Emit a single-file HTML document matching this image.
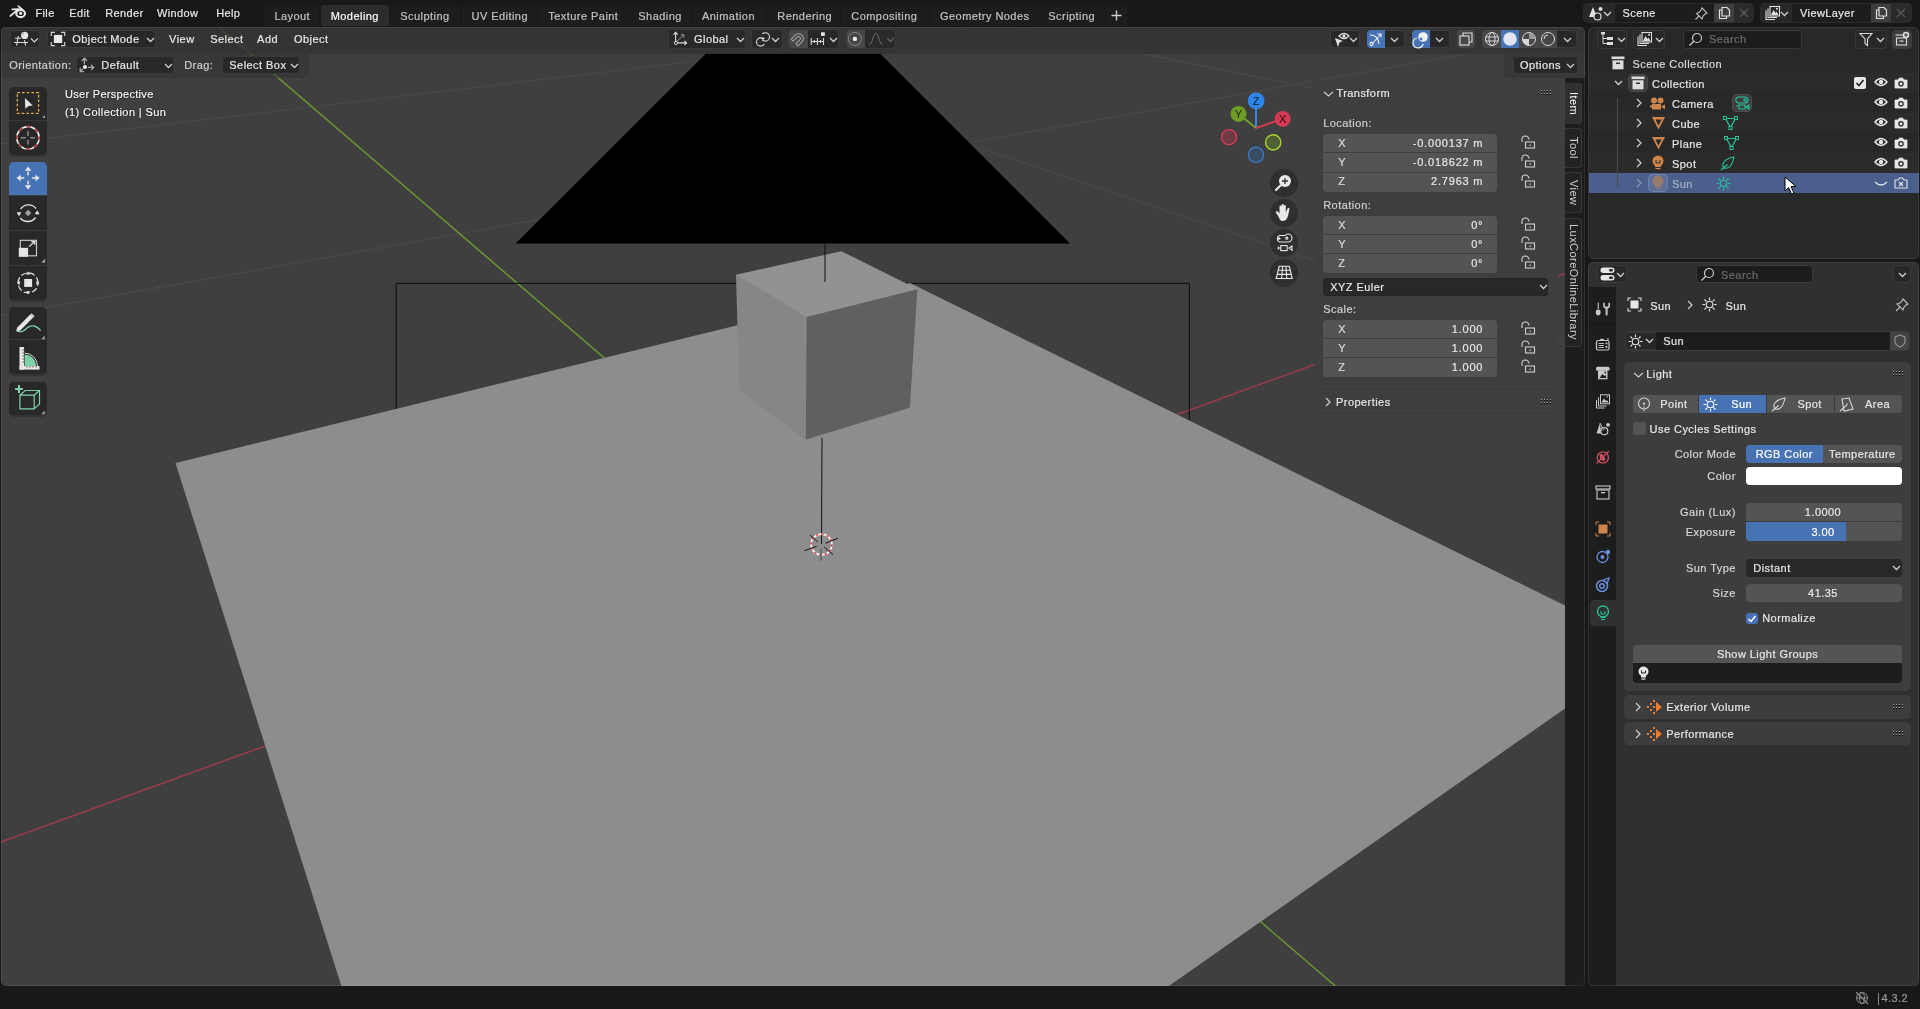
<!DOCTYPE html>
<html><head><meta charset="utf-8">
<style>
*{margin:0;padding:0;box-sizing:border-box}
body{will-change:transform;}
html,body{width:1920px;height:1009px;overflow:hidden;background:#181818;font-family:"Liberation Sans",sans-serif;color:#e6e6e6;font-size:11px}
.a{position:absolute}
.t{position:absolute;white-space:nowrap;line-height:14px;-webkit-font-smoothing:antialiased;-webkit-text-stroke:0.2px currentColor}
svg{overflow:visible}
</style></head><body>
<div class="a" style="left:1px;top:27px;width:1584px;height:959px;background:#3f3f3f;border-radius:5px;overflow:hidden">
<svg class="a" style="left:-1px;top:-27px" width="1920" height="1009" viewBox="0 0 1920 1009">
 <g stroke-width="1.1" fill="none">
  <line x1="0" y1="144" x2="983" y2="27" stroke="#4a4a4a"/>
  <line x1="0" y1="315.8" x2="1565" y2="36.3" stroke="#4a4a4a"/>
  <line x1="971.7" y1="145.4" x2="1565" y2="345" stroke="#4a4a4a"/>
  <line x1="1013" y1="27" x2="1565" y2="139.8" stroke="#4a4a4a"/>
  <line x1="0" y1="842.3" x2="1565" y2="273.6" stroke="#9e3b4b" stroke-width="1.5"/>
  <line x1="219" y1="27" x2="1340" y2="990" stroke="#6a9632" stroke-width="1.5"/>
 </g>
 <polygon points="706,53.5 880,53.5 1070,243.5 515.6,243.5" fill="#000"/>
 <polyline points="396.2,418 396.2,283.3 1189.3,283.3 1189.3,420" fill="none" stroke="#0a0a0a" stroke-width="1"/>
 <polygon points="175.5,463 910,283 1570,608 1570,705 1166,988 342,988" fill="#8c8d8e"/>
 <polygon points="736,274.7 841.3,251.2 917.4,288.9 806.2,316.8" fill="#919293"/>
 <polygon points="736,274.7 806.2,316.8 805.3,439.8 739.3,390.3" fill="#858786"/>
 <polygon points="806.2,316.8 917.4,288.9 909.8,407.8 805.3,439.8" fill="#606060"/>
 <g stroke="#9a9b9c" stroke-width="0.8" fill="none" opacity="0.6">
  <polyline points="736,274.7 806.2,316.8 917.4,288.9"/>
  <line x1="806.2" y1="316.8" x2="805.3" y2="439.8"/>
 </g>
 <line x1="825" y1="243" x2="825" y2="282" stroke="#111" stroke-width="1"/>
 <line x1="822" y1="438" x2="821.5" y2="544" stroke="#111" stroke-width="1"/>
 <g transform="translate(821.5,544.5)">
  <circle r="10.4" fill="none" stroke="#f4f4f4" stroke-width="1.6"/>
  <circle r="10.4" fill="none" stroke="#ee3333" stroke-width="1.6" stroke-dasharray="2.2 3.2"/>
  <g stroke="#151515" stroke-width="1"><line x1="-17.2" y1="6.2" x2="-4.7" y2="1.8"/><line x1="-11.3" y1="-9.3" x2="-3.8" y2="-2.7"/><line x1="3.9" y1="-1.2" x2="16.4" y2="-6.3"/><line x1="2.7" y1="2.6" x2="11.4" y2="10.1"/></g>
  <line x1="-0.5" y1="4.5" x2="-0.5" y2="16.3" stroke="#555" stroke-width="1.2"/>
 </g>
</svg>
</div>
<svg class="a" style="left:1855px;top:991px;" width="14" height="14" viewBox="0 0 14 14"><g stroke="#8a8a8a" stroke-width="1" fill="none"><circle cx="7" cy="7" r="5.5"/><ellipse cx="7" cy="7" rx="2.5" ry="5.5"/><line x1="1.5" y1="7" x2="12.5" y2="7"/><line x1="1" y1="1" x2="13" y2="13" stroke-width="1.3"/></g></svg>
<div class="a" style="left:1877.5px;top:992.5px;width:1px;height:12px;background:#8a8a8a;border-radius:0px;"></div>
<div class="t" style="left:1848px;width:60px;text-align:right;top:991.19px;font-size:11px;color:#9a9a9a;letter-spacing:0.4px;">4.3.2</div>
<svg class="a" style="left:0px;top:0px;" width="32" height="26" viewBox="0 0 32 26"><g stroke="#e8e8e8" fill="none" stroke-linecap="round"><path d="M10.4 15.9 L16.6 10.6" stroke-width="1.9"/><path d="M12.3 9.3 L19.5 9.2" stroke-width="1.7"/><path d="M18.3 6.2 L22.5 9.6" stroke-width="1.7"/><ellipse cx="20.6" cy="13.5" rx="4.4" ry="3.6" stroke-width="2.1"/></g><circle cx="20.6" cy="13.3" r="1.6" fill="#e8e8e8"/></svg>
<div class="t" style="left:35.5px;top:6.39px;font-size:11px;color:#e6e6e6;letter-spacing:0.35px;">File</div>
<div class="t" style="left:69.3px;top:6.39px;font-size:11px;color:#e6e6e6;letter-spacing:0.35px;">Edit</div>
<div class="t" style="left:105.3px;top:6.39px;font-size:11px;color:#e6e6e6;letter-spacing:0.35px;">Render</div>
<div class="t" style="left:157.1px;top:6.39px;font-size:11px;color:#e6e6e6;letter-spacing:0.35px;">Window</div>
<div class="t" style="left:216.2px;top:6.39px;font-size:11px;color:#e6e6e6;letter-spacing:0.35px;">Help</div>
<div class="a" style="left:264.4px;top:5px;width:54.900000000000034px;height:21px;background:#1d1d1d;border-radius:4px;border-bottom-left-radius:0;border-bottom-right-radius:0"></div>
<div class="t" style="left:274.4px;top:9.19px;font-size:11px;color:#c2c2c2;letter-spacing:0.45px;">Layout</div>
<div class="a" style="left:320.7px;top:5px;width:68.69999999999999px;height:21px;background:#2c2c2c;border-radius:4px;border-bottom-left-radius:0;border-bottom-right-radius:0"></div>
<div class="t" style="left:330.7px;top:9.19px;font-size:11px;color:#ffffff;letter-spacing:0.45px;">Modeling</div>
<div class="a" style="left:390.3px;top:5px;width:70.0px;height:21px;background:#1d1d1d;border-radius:4px;border-bottom-left-radius:0;border-bottom-right-radius:0"></div>
<div class="t" style="left:400.3px;top:9.19px;font-size:11px;color:#c2c2c2;letter-spacing:0.45px;">Sculpting</div>
<div class="a" style="left:461.5px;top:5px;width:75.70000000000005px;height:21px;background:#1d1d1d;border-radius:4px;border-bottom-left-radius:0;border-bottom-right-radius:0"></div>
<div class="t" style="left:471.5px;top:9.19px;font-size:11px;color:#c2c2c2;letter-spacing:0.45px;">UV Editing</div>
<div class="a" style="left:538.3px;top:5px;width:89.40000000000009px;height:21px;background:#1d1d1d;border-radius:4px;border-bottom-left-radius:0;border-bottom-right-radius:0"></div>
<div class="t" style="left:548.3px;top:9.19px;font-size:11px;color:#c2c2c2;letter-spacing:0.45px;">Texture Paint</div>
<div class="a" style="left:628.3px;top:5px;width:63.10000000000002px;height:21px;background:#1d1d1d;border-radius:4px;border-bottom-left-radius:0;border-bottom-right-radius:0"></div>
<div class="t" style="left:638.3px;top:9.19px;font-size:11px;color:#c2c2c2;letter-spacing:0.45px;">Shading</div>
<div class="a" style="left:692px;top:5px;width:74.39999999999998px;height:21px;background:#1d1d1d;border-radius:4px;border-bottom-left-radius:0;border-bottom-right-radius:0"></div>
<div class="t" style="left:702px;top:9.19px;font-size:11px;color:#c2c2c2;letter-spacing:0.45px;">Animation</div>
<div class="a" style="left:767.3px;top:5px;width:73.0px;height:21px;background:#1d1d1d;border-radius:4px;border-bottom-left-radius:0;border-bottom-right-radius:0"></div>
<div class="t" style="left:777.3px;top:9.19px;font-size:11px;color:#c2c2c2;letter-spacing:0.45px;">Rendering</div>
<div class="a" style="left:841.3px;top:5px;width:88.0px;height:21px;background:#1d1d1d;border-radius:4px;border-bottom-left-radius:0;border-bottom-right-radius:0"></div>
<div class="t" style="left:851.3px;top:9.19px;font-size:11px;color:#c2c2c2;letter-spacing:0.45px;">Compositing</div>
<div class="a" style="left:930px;top:5px;width:107.70000000000005px;height:21px;background:#1d1d1d;border-radius:4px;border-bottom-left-radius:0;border-bottom-right-radius:0"></div>
<div class="t" style="left:940px;top:9.19px;font-size:11px;color:#c2c2c2;letter-spacing:0.45px;">Geometry Nodes</div>
<div class="a" style="left:1038.3px;top:5px;width:67.0px;height:21px;background:#1d1d1d;border-radius:4px;border-bottom-left-radius:0;border-bottom-right-radius:0"></div>
<div class="t" style="left:1048.3px;top:9.19px;font-size:11px;color:#c2c2c2;letter-spacing:0.45px;">Scripting</div>
<div class="a" style="left:1106px;top:5px;width:21px;height:21px;background:#1d1d1d;border-radius:4px;border-bottom-left-radius:0;border-bottom-right-radius:0"></div>
<svg class="a" style="left:1111px;top:10px;" width="11" height="11" viewBox="0 0 11 11"><path d="M5.5 0.5 V10.5 M0.5 5.5 H10.5" stroke="#cfcfcf" stroke-width="1.3"/></svg>
<div class="a" style="left:1583.3px;top:3px;width:171.10000000000014px;height:20px;background:#2d2d2d;border-radius:5px;"></div>
<div class="a" style="left:1584.3px;top:4px;width:30.200000000000045px;height:18px;background:#282828;border-radius:4px;border-top-right-radius:0;border-bottom-right-radius:0"></div>
<div class="a" style="left:1614.5px;top:4px;width:99.70000000000005px;height:18px;background:#1d1d1d;border-radius:0px;"></div>
<div class="a" style="left:1714.2px;top:4px;width:20.0px;height:18px;background:#3e3e3e;border-radius:0px;"></div>
<div class="a" style="left:1734.2px;top:4px;width:19.200000000000045px;height:18px;background:#2a2a2a;border-radius:4px;border-top-left-radius:0;border-bottom-left-radius:0"></div>
<svg class="a" style="left:1588px;top:6px;" width="17" height="15" viewBox="0 0 17 15"><g fill="#e0e0e0"><path d="M5 1 L9 11 H1Z"/><circle cx="12.5" cy="3" r="2"/></g><circle cx="9.5" cy="10.5" r="3.5" fill="#282828" stroke="#e0e0e0" stroke-width="1.2"/></svg>
<svg class="a" style="left:1602.5px;top:11px;" width="9" height="6" viewBox="0 0 9 6"><path d="M1 1 L4.5 4.5 L8 1" stroke="#cfcfcf" stroke-width="1.3" fill="none"/></svg>
<div class="t" style="left:1622.5px;top:6.09px;font-size:11px;color:#e6e6e6;letter-spacing:0.4px;">Scene</div>
<svg class="a" style="left:1695.2px;top:6px;" width="14" height="14" viewBox="0 0 14 14"><g stroke="#bdbdbd" stroke-width="1.1" fill="none"><path d="M7 2 L12 7 L10 8 L8 10 L7 13 L1.5 7.5 L4.5 6 L6 4 Z"/><line x1="4" y1="10" x2="0.5" y2="13.5"/></g></svg>
<svg class="a" style="left:1718.2px;top:6px;" width="13" height="14" viewBox="0 0 13 14"><g stroke="#e0e0e0" stroke-width="1.2" fill="none"><path d="M4 1.5 H9 L11.5 4 V10 H4 Z"/><path d="M4 4 H1.5 V12.5 H8.5 V10"/></g></svg>
<svg class="a" style="left:1739.2px;top:8px;" width="10" height="10" viewBox="0 0 10 10"><path d="M1 1 L9 9 M9 1 L1 9" stroke="#5a5a5a" stroke-width="1.2"/></svg>
<div class="a" style="left:1760px;top:3px;width:151.5999999999999px;height:20px;background:#2d2d2d;border-radius:5px;"></div>
<div class="a" style="left:1761px;top:4px;width:31px;height:18px;background:#282828;border-radius:4px;border-top-right-radius:0;border-bottom-right-radius:0"></div>
<div class="a" style="left:1792px;top:4px;width:79.29999999999995px;height:18px;background:#1d1d1d;border-radius:0px;"></div>
<div class="a" style="left:1871.3px;top:4px;width:19.700000000000045px;height:18px;background:#3e3e3e;border-radius:0px;"></div>
<div class="a" style="left:1891px;top:4px;width:19.59999999999991px;height:18px;background:#2a2a2a;border-radius:4px;border-top-left-radius:0;border-bottom-left-radius:0"></div>
<svg class="a" style="left:1765px;top:6px;" width="16" height="15" viewBox="0 0 16 15"><g stroke="#e0e0e0" stroke-width="1.1" fill="none"><path d="M1 4.5 V13.5 H10"/><path d="M3 2.5 V11.5 H12"/><rect x="5" y="0.5" width="9.5" height="9.5"/></g><path d="M6 9 L8.5 4 L10.5 7 L11.5 5.5 L13.5 9Z" fill="#e0e0e0"/><circle cx="12" cy="2.8" r="1" fill="#e0e0e0"/></svg>
<svg class="a" style="left:1780px;top:11px;" width="9" height="6" viewBox="0 0 9 6"><path d="M1 1 L4.5 4.5 L8 1" stroke="#cfcfcf" stroke-width="1.3" fill="none"/></svg>
<div class="t" style="left:1800px;top:6.09px;font-size:11px;color:#e6e6e6;letter-spacing:0.4px;">ViewLayer</div>
<svg class="a" style="left:1875.3px;top:6px;" width="13" height="14" viewBox="0 0 13 14"><g stroke="#e0e0e0" stroke-width="1.2" fill="none"><path d="M4 1.5 H9 L11.5 4 V10 H4 Z"/><path d="M4 4 H1.5 V12.5 H8.5 V10"/></g></svg>
<svg class="a" style="left:1896px;top:8px;" width="10" height="10" viewBox="0 0 10 10"><path d="M1 1 L9 9 M9 1 L1 9" stroke="#5a5a5a" stroke-width="1.2"/></svg>
<div class="a" style="left:1px;top:27px;width:1584px;height:26.5px;background:rgba(50,50,50,0.82);border-radius:5px;border-bottom-left-radius:0;border-bottom-right-radius:0"></div>
<div class="a" style="left:1px;top:53.5px;width:308px;height:24.5px;background:rgba(52,52,52,0.6);border-radius:0px;border-bottom-right-radius:5px"></div>
<div class="a" style="left:1504px;top:53.5px;width:81px;height:24.5px;background:rgba(52,52,52,0.6);border-radius:0px;border-bottom-left-radius:5px"></div>
<div class="a" style="left:10.1px;top:29.8px;width:30.1px;height:18.499999999999996px;background:#282828;border-radius:4px;box-shadow:inset 0 0 0 1px #3a3a3a"></div>
<div class="a" style="left:46.9px;top:29.8px;width:109.29999999999998px;height:18.499999999999996px;background:#282828;border-radius:4px;box-shadow:inset 0 0 0 1px #3a3a3a"></div>
<svg class="a" style="left:0px;top:27px;" width="70" height="24" viewBox="0 0 70 24"><g transform="translate(0,-27)"><g stroke="#dcdcdc" stroke-width="1.1" fill="none"><path d="M15 38.3 H21 M14 42.5 H28 M18.3 36 L16.6 45.7 M24.5 40.2 L25.6 45.7"/><path d="M30.9 38.3 L34.4 41.8 L37.9 38.3" stroke-width="1.2"/></g>
<circle cx="24.6" cy="35.4" r="3.6" fill="#e6e6e6"/><path d="M22.6 34.5 a2.2 2.2 0 0 1 1.5 -1.6" stroke="#555" stroke-width="0.7" fill="none"/>
<g stroke="#cfcfcf" stroke-width="1.2" fill="none"><path d="M51.3 36 V32.3 H55 M61 32.3 H64.7 V36 M64.7 42 V45.7 H61 M55 45.7 H51.3 V42"/></g>
<rect x="53.9" y="34.9" width="8.3" height="8.1" fill="#e8e8e8"/></g></svg>
<div class="t" style="left:72.2px;top:31.79px;font-size:11px;color:#e6e6e6;letter-spacing:0.45px;">Object Mode</div>
<svg class="a" style="left:146px;top:37px;" width="9" height="6" viewBox="0 0 9 6"><path d="M1 1 L4.5 4.5 L8 1" stroke="#cfcfcf" stroke-width="1.3" fill="none"/></svg>
<div class="t" style="left:169.1px;top:31.79px;font-size:11px;color:#e6e6e6;letter-spacing:0.45px;">View</div>
<div class="t" style="left:210.2px;top:31.79px;font-size:11px;color:#e6e6e6;letter-spacing:0.45px;">Select</div>
<div class="t" style="left:257.1px;top:31.79px;font-size:11px;color:#e6e6e6;letter-spacing:0.45px;">Add</div>
<div class="t" style="left:294px;top:31.79px;font-size:11px;color:#e6e6e6;letter-spacing:0.45px;">Object</div>
<div class="t" style="left:9.2px;top:58.39px;font-size:11px;color:#cfcfcf;letter-spacing:0.45px;">Orientation:</div>
<div class="a" style="left:76.1px;top:55.9px;width:98.0px;height:18.199999999999996px;background:#282828;border-radius:4px;box-shadow:inset 0 0 0 1px #3a3a3a"></div>
<svg class="a" style="left:76px;top:54px;" width="24" height="22" viewBox="0 0 24 22"><g transform="translate(-76,-54)" stroke="#a8a8a8" stroke-width="1.3" fill="none" stroke-linecap="round"><path d="M84.4 63.8 V58.3 M82.2 60.5 L84.4 58.2 L86.7 60.5"/><path d="M88.3 67.4 H93.6 M91.4 65.3 L93.7 67.4 L91.4 69.6"/><path d="M80.2 68.2 V71.6 H83.6 M80.5 71.3 L82.6 69.2"/></g><circle cx="8.94" cy="13.08" r="2" fill="#ececec"/></svg>
<div class="t" style="left:101.3px;top:58.39px;font-size:11px;color:#e6e6e6;letter-spacing:0.45px;">Default</div>
<svg class="a" style="left:164px;top:63px;" width="9" height="6" viewBox="0 0 9 6"><path d="M1 1 L4.5 4.5 L8 1" stroke="#cfcfcf" stroke-width="1.3" fill="none"/></svg>
<div class="t" style="left:184.2px;top:58.39px;font-size:11px;color:#cfcfcf;letter-spacing:0.45px;">Drag:</div>
<div class="a" style="left:221.7px;top:55.9px;width:78.5px;height:18.199999999999996px;background:#282828;border-radius:4px;box-shadow:inset 0 0 0 1px #3a3a3a"></div>
<div class="t" style="left:229.3px;top:58.39px;font-size:11px;color:#e6e6e6;letter-spacing:0.45px;">Select Box</div>
<svg class="a" style="left:289.5px;top:63px;" width="9" height="6" viewBox="0 0 9 6"><path d="M1 1 L4.5 4.5 L8 1" stroke="#cfcfcf" stroke-width="1.3" fill="none"/></svg>
<div class="a" style="left:1513px;top:56px;width:65px;height:18px;background:#282828;border-radius:4px;box-shadow:inset 0 0 0 1px #3a3a3a"></div>
<div class="t" style="left:1520px;top:58.39px;font-size:11px;color:#e6e6e6;letter-spacing:0.45px;">Options</div>
<svg class="a" style="left:1565.5px;top:63px;" width="9" height="6" viewBox="0 0 9 6"><path d="M1 1 L4.5 4.5 L8 1" stroke="#cfcfcf" stroke-width="1.3" fill="none"/></svg>
<div class="a" style="left:668.3px;top:29.3px;width:77.40000000000009px;height:19.7px;background:#282828;border-radius:4px;box-shadow:inset 0 0 0 1px #3a3a3a"></div>
<svg class="a" style="left:664px;top:27px;" width="120" height="24" viewBox="0 0 120 24"><g transform="translate(-664,-27)">
<g stroke="#dcdcdc" stroke-width="1.1" fill="none" stroke-linecap="round"><path d="M675.6 41.2 V32.5 M673.8 34.3 L675.6 32.4 L677.4 34.3"/><path d="M677.6 42.9 H686.5 M684.7 41.1 L686.6 42.9 L684.7 44.7"/></g>
<g stroke="#9a9a9a" stroke-width="1" fill="none" stroke-linecap="round"><path d="M677 41.3 L683.7 34.8 M681.2 34.8 H683.8 V37.3"/></g>
<circle cx="675.9" cy="42.9" r="1.6" fill="none" stroke="#dcdcdc" stroke-width="1"/>
</g></svg>
<div class="t" style="left:694px;top:32.19px;font-size:11px;color:#e6e6e6;letter-spacing:0.45px;">Global</div>
<svg class="a" style="left:735.5px;top:37px;" width="9" height="6" viewBox="0 0 9 6"><path d="M1 1 L4.5 4.5 L8 1" stroke="#cfcfcf" stroke-width="1.3" fill="none"/></svg>
<div class="a" style="left:751px;top:29.3px;width:31.700000000000045px;height:19.7px;background:#282828;border-radius:4px;box-shadow:inset 0 0 0 1px #3a3a3a"></div>
<svg class="a" style="left:664px;top:27px;" width="120" height="24" viewBox="0 0 120 24"><g transform="translate(-664,-27)"><g stroke="#dcdcdc" stroke-width="1.1" fill="none"><circle cx="760.6" cy="42" r="4.1" stroke-dasharray="20 6" stroke-dashoffset="-2"/><circle cx="765.3" cy="36.9" r="4.2" stroke-dasharray="20 6" stroke-dashoffset="-16"/></g><circle cx="763.4" cy="38.6" r="1" fill="#e8e8e8"/></g></svg>
<svg class="a" style="left:771px;top:37px;" width="9" height="6" viewBox="0 0 9 6"><path d="M1 1 L4.5 4.5 L8 1" stroke="#cfcfcf" stroke-width="1.3" fill="none"/></svg>
<div class="a" style="left:788.3px;top:29.3px;width:51.0px;height:19.7px;background:#282828;border-radius:4px;box-shadow:inset 0 0 0 1px #3a3a3a"></div>
<div class="a" style="left:789px;top:30.3px;width:19px;height:17.7px;background:#474747;border-radius:3px;border-top-right-radius:0;border-bottom-right-radius:0"></div>
<div class="a" style="left:845.7px;top:29.3px;width:50.0px;height:19.7px;background:#2a2a2a;border-radius:4px;box-shadow:inset 0 0 0 1px #3a3a3a"></div>
<div class="a" style="left:846.7px;top:30.3px;width:18px;height:17.7px;background:#474747;border-radius:3px;border-top-right-radius:0;border-bottom-right-radius:0"></div>
<svg class="a" style="left:784px;top:27px;" width="120" height="24" viewBox="0 0 120 24"><g transform="translate(-784,-27)">
<g transform="translate(798.2,38.8) rotate(45)"><path d="M-4.8 5.2 V-0.5 A4.8 4.8 0 0 1 4.8 -0.5 V5.2 H1.9 V-0.5 A1.9 1.9 0 0 0 -1.9 -0.5 V5.2 Z" fill="none" stroke="#a8a8a8" stroke-width="1"/></g>
<g stroke="#d8d8d8" stroke-width="1.1"><path d="M811.2 38 V45 M817.4 38 V45 M823.5 38 V45 M814.3 40 V43 M820.5 40 V43 M811.2 41.5 H823.5"/></g>
<rect x="821" y="32.3" width="3.8" height="3.6" fill="#e8e8e8"/>
<circle cx="854.9" cy="38.9" r="6.6" fill="none" stroke="#8a8a8a" stroke-width="0.9"/>
<circle cx="854.9" cy="38.9" r="2.2" fill="#ececec"/>
<path d="M869 44.8 C872.5 44.8 873 33.3 875.9 33.3 C878.8 33.3 879.3 44.8 882.8 44.8" stroke="#6a6a6a" stroke-width="1" fill="none"/>
</g></svg>
<svg class="a" style="left:829px;top:37px;" width="9" height="6" viewBox="0 0 9 6"><path d="M1 1 L4.5 4.5 L8 1" stroke="#cfcfcf" stroke-width="1.3" fill="none"/></svg>
<svg class="a" style="left:885.5px;top:37px;" width="9" height="6" viewBox="0 0 9 6"><path d="M1 1 L4.5 4.5 L8 1" stroke="#5e5e5e" stroke-width="1.3" fill="none"/></svg>
<div class="a" style="left:1329.9px;top:29.9px;width:30.199999999999818px;height:18.1px;background:#282828;border-radius:4px;box-shadow:inset 0 0 0 1px #3a3a3a"></div>
<svg class="a" style="left:1333px;top:31px;" width="20" height="17" viewBox="0 0 20 17"><path d="M2 7 L10 10 L6.5 11.5 L5 16 Z" fill="#e0e0e0"/><g stroke="#e0e0e0" stroke-width="1.2" fill="none"><path d="M6 5 Q11 0 16 5 Q11 10 6 5Z"/></g><circle cx="11" cy="5" r="1.6" fill="#e0e0e0"/></svg>
<svg class="a" style="left:1349px;top:37px;" width="9" height="6" viewBox="0 0 9 6"><path d="M1 1 L4.5 4.5 L8 1" stroke="#cfcfcf" stroke-width="1.3" fill="none"/></svg>
<div class="a" style="left:1367px;top:29.9px;width:38px;height:18.1px;background:#282828;border-radius:4px;box-shadow:inset 0 0 0 1px #3a3a3a"></div>
<div class="a" style="left:1367px;top:29.9px;width:18px;height:18.1px;background:#4772b3;border-radius:4px;border-top-right-radius:0;border-bottom-right-radius:0"></div>
<svg class="a" style="left:1368px;top:31px;" width="16" height="16" viewBox="0 0 16 16"><g stroke="#f0f0f0" stroke-width="1.1" fill="none"><path d="M2 4 Q10 4 11 13"/><path d="M4 13 L13 3 M9.5 3 H13 V6.5"/><circle cx="3.5" cy="13" r="1.6"/></g></svg>
<svg class="a" style="left:1390px;top:37px;" width="9" height="6" viewBox="0 0 9 6"><path d="M1 1 L4.5 4.5 L8 1" stroke="#cfcfcf" stroke-width="1.3" fill="none"/></svg>
<div class="a" style="left:1412.2px;top:29.9px;width:37.59999999999991px;height:18.1px;background:#282828;border-radius:4px;box-shadow:inset 0 0 0 1px #3a3a3a"></div>
<div class="a" style="left:1412.2px;top:29.9px;width:18px;height:18.1px;background:#4772b3;border-radius:4px;border-top-right-radius:0;border-bottom-right-radius:0"></div>
<svg class="a" style="left:1413px;top:31px;" width="16" height="16" viewBox="0 0 16 16"><circle cx="10" cy="6" r="4.8" fill="#f0f0f0"/><path d="M4 7 a5 5 0 1 0 6 6" stroke="#f0f0f0" stroke-width="1.2" fill="none"/><circle cx="8" cy="8" r="1.4" fill="#4772b3"/></svg>
<svg class="a" style="left:1435px;top:37px;" width="9" height="6" viewBox="0 0 9 6"><path d="M1 1 L4.5 4.5 L8 1" stroke="#cfcfcf" stroke-width="1.3" fill="none"/></svg>
<div class="a" style="left:1457px;top:29.9px;width:18px;height:18.1px;background:#474747;border-radius:4px;"></div>
<svg class="a" style="left:1458px;top:31px;" width="16" height="16" viewBox="0 0 16 16"><g stroke="#e0e0e0" stroke-width="1.1" fill="none"><rect x="2" y="5" width="9" height="9"/><path d="M5 5 V2 H14 V11 H11"/></g></svg>
<div class="a" style="left:1481.9px;top:29.9px;width:95.09999999999991px;height:18.1px;background:#282828;border-radius:4px;box-shadow:inset 0 0 0 1px #3a3a3a"></div>
<div class="a" style="left:1482px;top:29.9px;width:18.5px;height:18.1px;background:#474747;border-radius:4px;border-top-right-radius:0;border-bottom-right-radius:0"></div>
<div class="a" style="left:1500.5px;top:29.9px;width:18.5px;height:18.1px;background:#4772b3;border-radius:0px;"></div>
<div class="a" style="left:1519px;top:29.9px;width:18.5px;height:18.1px;background:#474747;border-radius:0px;"></div>
<div class="a" style="left:1538px;top:29.9px;width:19px;height:18.1px;background:#474747;border-radius:0px;"></div>
<svg class="a" style="left:1484px;top:31px;" width="16" height="16" viewBox="0 0 16 16"><g stroke="#d8d8d8" stroke-width="1" fill="none"><circle cx="8" cy="8" r="6.5"/><ellipse cx="8" cy="8" rx="3" ry="6.5"/><path d="M1.5 6 H14.5 M1.5 10 H14.5"/></g></svg>
<svg class="a" style="left:1502px;top:31px;" width="16" height="16" viewBox="0 0 16 16"><circle cx="8" cy="8" r="6.8" fill="#dfe6f2"/></svg>
<svg class="a" style="left:1521px;top:31px;" width="16" height="16" viewBox="0 0 16 16"><circle cx="8" cy="8" r="6.5" fill="none" stroke="#d8d8d8" stroke-width="1"/><path d="M8 1.5 V8 H14.5 A6.5 6.5 0 0 0 8 1.5Z" fill="#9a9a9a"/><path d="M8 8 H1.5 A6.5 6.5 0 0 0 8 14.5Z" fill="#d8d8d8"/></svg>
<svg class="a" style="left:1540px;top:31px;" width="16" height="16" viewBox="0 0 16 16"><circle cx="8" cy="8" r="6.5" fill="none" stroke="#d8d8d8" stroke-width="1"/><path d="M4 8 a4 4 0 0 1 4 -4" stroke="#d8d8d8" stroke-width="1" fill="none"/></svg>
<svg class="a" style="left:1563px;top:37px;" width="9" height="6" viewBox="0 0 9 6"><path d="M1 1 L4.5 4.5 L8 1" stroke="#cfcfcf" stroke-width="1.3" fill="none"/></svg>
<div class="a" style="left:9px;top:87px;width:38px;height:67.6px;background:#3a3a3a;border-radius:5px;box-shadow:0 2px 0 #333"></div>
<div class="a" style="left:9px;top:87px;width:38px;height:32.7px;background:#282828;border-radius:0px;border-radius:5px 5px 0 0"></div>
<div class="a" style="left:9px;top:121px;width:38px;height:33.599999999999994px;background:#282828;border-radius:0px;border-radius:0 0 5px 5px"></div>
<div class="a" style="left:9px;top:162px;width:38px;height:137.60000000000002px;background:#3a3a3a;border-radius:5px;box-shadow:0 2px 0 #333"></div>
<div class="a" style="left:9px;top:162px;width:38px;height:33px;background:#4772b3;border-radius:0px;border-radius:5px 5px 0 0"></div>
<div class="a" style="left:9px;top:196px;width:38px;height:34px;background:#282828;border-radius:0px;border-radius:0"></div>
<div class="a" style="left:9px;top:231px;width:38px;height:33.60000000000002px;background:#282828;border-radius:0px;border-radius:0"></div>
<div class="a" style="left:9px;top:266px;width:38px;height:33.60000000000002px;background:#282828;border-radius:0px;border-radius:0 0 5px 5px"></div>
<div class="a" style="left:9px;top:306.7px;width:38px;height:67.30000000000001px;background:#3a3a3a;border-radius:5px;box-shadow:0 2px 0 #333"></div>
<div class="a" style="left:9px;top:306.7px;width:38px;height:32.60000000000002px;background:#282828;border-radius:0px;border-radius:5px 5px 0 0"></div>
<div class="a" style="left:9px;top:340.3px;width:38px;height:33.69999999999999px;background:#282828;border-radius:0px;border-radius:0 0 5px 5px"></div>
<div class="a" style="left:9px;top:382px;width:38px;height:33px;background:#3a3a3a;border-radius:5px;box-shadow:0 2px 0 #333"></div>
<div class="a" style="left:9px;top:382px;width:38px;height:33px;background:#282828;border-radius:0px;border-radius:5px"></div>
<svg class="a" style="left:0px;top:80px;" width="60" height="340" viewBox="0 0 60 340"><g transform="translate(0,-80)">
<rect x="17.3" y="92.6" width="21.3" height="20.8" fill="none" stroke="#e7b04e" stroke-width="1.3" stroke-dasharray="2.6 2.1"/>
<path d="M24.9 97.9 L32.8 105.4 L28.6 105.9 L25.3 108.8 Z" fill="#e6e6e6"/>
<path d="M45 115 V118 H42Z" fill="#9a9a9a"/>
<circle cx="28" cy="137.8" r="11.2" fill="none" stroke="#f0f0f0" stroke-width="1.6"/>
<circle cx="28" cy="137.8" r="11.2" fill="none" stroke="#a83838" stroke-width="1.6" stroke-dasharray="4.4 4.4" stroke-dashoffset="2"/>
<path d="M28 131 V136 M28 140 V144.6 M20.8 137.8 H25.7 M30.2 137.8 H35.1" stroke="#8a8a8a" stroke-width="1.5"/>
<g fill="#e6e6e6"><path d="M28.1 166.5 L31.3 170.8 H24.9Z M28.1 189.5 L31.3 185.2 H24.9Z M16.5 178 L20.8 174.8 V181.2Z M39.7 178 L35.4 174.8 V181.2Z"/></g>
<path d="M28.1 171.5 V175.3 M28.1 180.7 V184.5 M20.5 178 H24.3 M31.9 178 H35.7" stroke="#e6e6e6" stroke-width="1.5"/>
<path d="M20.6 209 A9.7 9.7 0 0 1 36 208.5 M35.6 217.5 A9.7 9.7 0 0 1 20.3 218" stroke="#e6e6e6" stroke-width="1.3" fill="none"/>
<path d="M28.1 209.8 L31.3 213 L28.1 216.2 L24.9 213Z" fill="#a0a0a0"/>
<path d="M16.6 212.2 H21.4 L19 216.3Z M34.8 214.3 H39.6 L37.2 210.2Z" fill="#e6e6e6"/>
<rect x="20.3" y="240.3" width="16.2" height="15.5" fill="none" stroke="#cfcfcf" stroke-width="1.1"/>
<rect x="18.8" y="247.8" width="9.3" height="9" fill="#e6e6e6"/>
<path d="M29 246.6 L34.6 241.7 M31.3 241.6 H34.8 V245" stroke="#e6e6e6" stroke-width="1.2" fill="none"/>
<path d="M45.2 258.6 V262.8 H41Z" fill="#9a9a9a"/>
<circle cx="28.1" cy="282.9" r="10" fill="none" stroke="#e6e6e6" stroke-width="1.2" stroke-dasharray="6 2.5" stroke-dashoffset="3"/>
<rect x="24.2" y="279" width="7.9" height="7.9" fill="#e6e6e6"/>
<path d="M28.1 271.6 L30.3 274.6 H25.9Z M28.1 294.2 L30.3 291.2 H25.9Z M16.8 282.9 L19.8 280.7 V285.1Z M39.4 282.9 L36.4 280.7 V285.1Z" fill="#e6e6e6"/>
<path d="M17 327.8 L30.2 314.6 L33.2 317.6 L20 330.8 L16.2 331.6Z" fill="#e6e6e6"/>
<path d="M30.2 314.6 L31.6 313.2 L34.6 316.2 L33.2 317.6Z" fill="#d0d0d0"/>
<path d="M17.5 331 C21 333.5 24 331 27 328 C31 324.5 36 325 40.7 330.6" stroke="#7fd1a8" stroke-width="1.3" fill="none"/>
<path d="M44.8 335.6 V339.2 H41.2Z" fill="#9a9a9a"/>
<path d="M24.7 354.7 A11.3 11.3 0 0 1 36 366 H24.7Z" fill="#7fd1a8"/>
<path d="M24.7 353.2 A12.8 12.8 0 0 1 37.5 366" stroke="#e6e6e6" stroke-width="0.9" fill="none"/>
<rect x="19.5" y="347" width="4.6" height="22.6" fill="#e6e6e6"/>
<rect x="19.5" y="366" width="20" height="3.6" fill="#e6e6e6"/>
<path d="M22.5 350 H24 M22.5 353 H24 M22.5 356 H24 M22.5 359 H24 M22.5 362 H24 M27 366 V367.5 M30 366 V367.5 M33 366 V367.5 M36 366 V367.5" stroke="#282828" stroke-width="0.8"/>
<path d="M15.1 388.9 H22.9 M19 385 V392.9" stroke="#7fd1a8" stroke-width="2"/>
<path d="M19.9 395.2 H34.2 V408.9 H19.9Z M19.9 395.2 L25.2 390.5 H39.5 V404 L34.2 408.9 M34.2 395.2 L39.5 390.5" stroke="#7fd1a8" stroke-width="1.2" fill="none"/>
<path d="M44.8 410.6 V414.2 H41.2Z" fill="#9a9a9a"/>
</g></svg>
<div class="t" style="left:65px;top:86.59px;font-size:11px;color:#ffffff;letter-spacing:0.3px;text-shadow:0 0 1px #000,0 0 1px #000">User Perspective</div>
<div class="t" style="left:65px;top:105.09px;font-size:11px;color:#ffffff;letter-spacing:0.4px;text-shadow:0 0 1px #000,0 0 1px #000">(1) Collection | Sun</div>
<svg class="a" style="left:1220px;top:88px;" width="72" height="76" viewBox="0 0 72 76">
<g transform="translate(-1220,-88)">
<line x1="1256" y1="128" x2="1256" y2="104" stroke="#3987e0" stroke-width="2"/>
<line x1="1256" y1="128" x2="1241" y2="116" stroke="#72a32a" stroke-width="2"/>
<line x1="1256" y1="128" x2="1279" y2="120" stroke="#d33b52" stroke-width="2"/>
<circle cx="1229" cy="137.2" r="7.6" fill="#6e3a44" stroke="#d33b52" stroke-width="1.4"/>
<circle cx="1273.2" cy="142.4" r="7.6" fill="#4f6034" stroke="#a6d62f" stroke-width="1.4"/>
<circle cx="1256" cy="154.8" r="7.6" fill="#3a4a63" stroke="#3a78c4" stroke-width="1.4"/>
<circle cx="1256.1" cy="100.8" r="8.4" fill="#2e86e8"/>
<circle cx="1238.5" cy="113.9" r="8" fill="#6e9c25"/>
<circle cx="1282.6" cy="118.9" r="8" fill="#d33b52"/>
<text x="1256.1" y="105" font-size="11" text-anchor="middle" fill="#101a26" font-family="Liberation Sans">Z</text>
<text x="1238.5" y="118" font-size="11" text-anchor="middle" fill="#1b2408" font-family="Liberation Sans">Y</text>
<text x="1282.6" y="123" font-size="11" text-anchor="middle" fill="#2a0a10" font-family="Liberation Sans">X</text>
</g></svg>
<div class="a" style="left:1270px;top:168.6px;width:28px;height:28px;background:#2f2f2f;border-radius:14px;"></div>
<div class="a" style="left:1270px;top:198.8px;width:28px;height:28px;background:#2f2f2f;border-radius:14px;"></div>
<div class="a" style="left:1270px;top:228.8px;width:28px;height:28px;background:#2f2f2f;border-radius:14px;"></div>
<div class="a" style="left:1270px;top:258.5px;width:28px;height:28px;background:#2f2f2f;border-radius:14px;"></div>
<svg class="a" style="left:1274px;top:173px;" width="20" height="20" viewBox="0 0 20 20"><circle cx="11" cy="8" r="6" fill="#e8e8e8"/><path d="M11 5 V11 M8 8 H14" stroke="#333" stroke-width="1.3"/><path d="M6.5 12.5 L2 17" stroke="#e8e8e8" stroke-width="2.2" stroke-linecap="round"/></svg>
<svg class="a" style="left:1268px;top:196px;" width="32" height="92" viewBox="0 0 32 92"><g transform="translate(-1268,-196)">
<path d="M1278.5 216.5 L1275.8 212.6 a1.2 1.2 0 0 1 1.9 -1.2 L1279.5 213.5 V206.5 a1.05 1.05 0 0 1 2.1 0 V212 V205 a1.05 1.05 0 0 1 2.1 0 V212 V206 a1.05 1.05 0 0 1 2.1 0 V212.5 L1287.5 208.5 a1.05 1.05 0 0 1 2 0.6 L1288 216 Q1286.5 221 1282.5 221 Q1280 221 1278.5 216.5Z" fill="#e8e8e8"/>
<g stroke="#e8e8e8" stroke-width="1.1" fill="none"><path d="M1279.5 235.5 H1285 Q1286 234 1288 234 a3 3 0 0 1 0 8 H1279.5 a3.5 3.5 0 0 1 0 -6.5Z"/><circle cx="1286.8" cy="238.2" r="1.1"/><path d="M1277.5 238.6 H1280.5 M1279 237.1 V240.1"/><rect x="1280.8" y="245.6" width="6.3" height="5"/><path d="M1288.8 248.1 L1292 246 V250.3Z M1278.3 246.5 V249.5 M1278.3 248 H1280.8"/></g>
<g stroke="#e8e8e8" stroke-width="1.1" fill="none"><path d="M1279.2 266.3 H1289.3 L1292.2 278.5 H1276.2Z M1277.8 270.3 H1290.6 M1277 274.4 H1291.4 M1282.6 266.3 L1281.6 278.5 M1285.9 266.3 L1286.8 278.5"/></g>
</g></svg>
<div class="a" style="left:1314px;top:80px;width:244px;height:306px;background:#3e3e3e;border-radius:0px;border-radius:0 0 4px 4px"></div>
<div class="a" style="left:1314px;top:388.5px;width:244px;height:25.5px;background:#3e3e3e;border-radius:4px;box-shadow:inset 0 0 0 1px #393939"></div>
<div class="a" style="left:1565px;top:78px;width:20px;height:908px;background:#1d1d1d;border-radius:0px;"></div>
<div class="a" style="left:1565px;top:82.8px;width:16.7px;height:41.10000000000001px;background:#303030;border-radius:0px;border-radius:0 4px 4px 0;box-shadow:inset -1px 0 0 #3a3a3a,inset 0 1px 0 #353535,inset 0 -1px 0 #353535"></div>
<div class="a" style="left:1566px;top:82.8px;width:16px;height:41.10000000000001px;writing-mode:vertical-rl;font-size:11px;line-height:16px;letter-spacing:0.45px;text-align:center;color:#ffffff">Item</div>
<div class="a" style="left:1565px;top:127.8px;width:16.7px;height:40.500000000000014px;background:#232323;border-radius:0px;border-radius:0 4px 4px 0;box-shadow:inset -1px 0 0 #3a3a3a,inset 0 1px 0 #353535,inset 0 -1px 0 #353535"></div>
<div class="a" style="left:1566px;top:127.8px;width:16px;height:40.500000000000014px;writing-mode:vertical-rl;font-size:11px;line-height:16px;letter-spacing:0.45px;text-align:center;color:#d0d0d0">Tool</div>
<div class="a" style="left:1565px;top:171.7px;width:16.7px;height:41.10000000000002px;background:#232323;border-radius:0px;border-radius:0 4px 4px 0;box-shadow:inset -1px 0 0 #3a3a3a,inset 0 1px 0 #353535,inset 0 -1px 0 #353535"></div>
<div class="a" style="left:1566px;top:171.7px;width:16px;height:41.10000000000002px;writing-mode:vertical-rl;font-size:11px;line-height:16px;letter-spacing:0.45px;text-align:center;color:#d0d0d0">View</div>
<div class="a" style="left:1565px;top:217.5px;width:16.7px;height:129.7px;background:#232323;border-radius:0px;border-radius:0 4px 4px 0;box-shadow:inset -1px 0 0 #3a3a3a,inset 0 1px 0 #353535,inset 0 -1px 0 #353535"></div>
<div class="a" style="left:1566px;top:217.5px;width:16px;height:129.7px;writing-mode:vertical-rl;font-size:11px;line-height:16px;letter-spacing:0.45px;text-align:center;color:#d0d0d0">LuxCoreOnlineLibrary</div>
<svg class="a" style="left:1323px;top:91px;" width="11" height="6" viewBox="0 0 11 6"><path d="M1 0.8 L5.5 5 L10 0.8" stroke="#d8d8d8" stroke-width="1.1" fill="none"/></svg>
<div class="t" style="left:1336.4px;top:86.09px;font-size:11px;color:#e6e6e6;letter-spacing:0.45px;">Transform</div>
<svg class="a" style="left:1541px;top:90px;" width="11" height="6" viewBox="0 0 11 6"><rect x="0" y="0" width="1" height="1" fill="#a8a8a8"/><rect x="0" y="1" width="1" height="1" fill="#000"/><rect x="0" y="3" width="1" height="1" fill="#a8a8a8"/><rect x="0" y="4" width="1" height="1" fill="#000"/><rect x="3" y="0" width="1" height="1" fill="#a8a8a8"/><rect x="3" y="1" width="1" height="1" fill="#000"/><rect x="3" y="3" width="1" height="1" fill="#a8a8a8"/><rect x="3" y="4" width="1" height="1" fill="#000"/><rect x="6" y="0" width="1" height="1" fill="#a8a8a8"/><rect x="6" y="1" width="1" height="1" fill="#000"/><rect x="6" y="3" width="1" height="1" fill="#a8a8a8"/><rect x="6" y="4" width="1" height="1" fill="#000"/><rect x="9" y="0" width="1" height="1" fill="#a8a8a8"/><rect x="9" y="1" width="1" height="1" fill="#000"/><rect x="9" y="3" width="1" height="1" fill="#a8a8a8"/><rect x="9" y="4" width="1" height="1" fill="#000"/></svg>
<div class="t" style="left:1323.2px;top:116.19px;font-size:11px;color:#d0d0d0;letter-spacing:0.45px;">Location:</div>
<div class="a" style="left:1323px;top:134.3px;width:174px;height:57.29999999999998px;background:#545454;border-radius:4px;"></div>
<div class="t" style="left:1338.2px;top:136.24px;font-size:11px;color:#dcdcdc;letter-spacing:0.45px;">X</div>
<div class="t" style="left:1333.3px;width:150px;text-align:right;top:136.24px;font-size:11px;color:#e6e6e6;letter-spacing:0.8px;">-0.000137 m</div>
<svg class="a" style="left:1520px;top:135.35000000000002px;" width="16" height="14" viewBox="0 0 16 14"><g stroke="#cfcfcf" stroke-width="1.1" fill="none"><path d="M2 7 V4.5 a3.5 3.5 0 0 1 7 0"/><rect x="5.5" y="7" width="9" height="6"/></g><rect x="9.5" y="9.5" width="1.3" height="1.3" fill="#cfcfcf"/></svg>
<div class="a" style="left:1323px;top:152.4px;width:174px;height:1px;background:#3f3f3f;border-radius:0px;"></div>
<div class="t" style="left:1338.2px;top:155.34px;font-size:11px;color:#dcdcdc;letter-spacing:0.45px;">Y</div>
<div class="t" style="left:1333.3px;width:150px;text-align:right;top:155.34px;font-size:11px;color:#e6e6e6;letter-spacing:0.8px;">-0.018622 m</div>
<svg class="a" style="left:1520px;top:154.45px;" width="16" height="14" viewBox="0 0 16 14"><g stroke="#cfcfcf" stroke-width="1.1" fill="none"><path d="M2 7 V4.5 a3.5 3.5 0 0 1 7 0"/><rect x="5.5" y="7" width="9" height="6"/></g><rect x="9.5" y="9.5" width="1.3" height="1.3" fill="#cfcfcf"/></svg>
<div class="a" style="left:1323px;top:171.5px;width:174px;height:1px;background:#3f3f3f;border-radius:0px;"></div>
<div class="t" style="left:1338.2px;top:174.44px;font-size:11px;color:#dcdcdc;letter-spacing:0.45px;">Z</div>
<div class="t" style="left:1333.3px;width:150px;text-align:right;top:174.44px;font-size:11px;color:#e6e6e6;letter-spacing:0.8px;">2.7963 m</div>
<svg class="a" style="left:1520px;top:173.55px;" width="16" height="14" viewBox="0 0 16 14"><g stroke="#cfcfcf" stroke-width="1.1" fill="none"><path d="M2 7 V4.5 a3.5 3.5 0 0 1 7 0"/><rect x="5.5" y="7" width="9" height="6"/></g><rect x="9.5" y="9.5" width="1.3" height="1.3" fill="#cfcfcf"/></svg>
<div class="t" style="left:1323.2px;top:197.99px;font-size:11px;color:#d0d0d0;letter-spacing:0.45px;">Rotation:</div>
<div class="a" style="left:1323px;top:216.1px;width:174px;height:57.400000000000006px;background:#545454;border-radius:4px;"></div>
<div class="t" style="left:1338.2px;top:218.06px;font-size:11px;color:#dcdcdc;letter-spacing:0.45px;">X</div>
<div class="t" style="left:1333.3px;width:150px;text-align:right;top:218.06px;font-size:11px;color:#e6e6e6;letter-spacing:0.8px;">0°</div>
<svg class="a" style="left:1520px;top:217.16666666666666px;" width="16" height="14" viewBox="0 0 16 14"><g stroke="#cfcfcf" stroke-width="1.1" fill="none"><path d="M2 7 V4.5 a3.5 3.5 0 0 1 7 0"/><rect x="5.5" y="7" width="9" height="6"/></g><rect x="9.5" y="9.5" width="1.3" height="1.3" fill="#cfcfcf"/></svg>
<div class="a" style="left:1323px;top:234.23333333333332px;width:174px;height:1px;background:#3f3f3f;border-radius:0px;"></div>
<div class="t" style="left:1338.2px;top:237.19px;font-size:11px;color:#dcdcdc;letter-spacing:0.45px;">Y</div>
<div class="t" style="left:1333.3px;width:150px;text-align:right;top:237.19px;font-size:11px;color:#e6e6e6;letter-spacing:0.8px;">0°</div>
<svg class="a" style="left:1520px;top:236.29999999999998px;" width="16" height="14" viewBox="0 0 16 14"><g stroke="#cfcfcf" stroke-width="1.1" fill="none"><path d="M2 7 V4.5 a3.5 3.5 0 0 1 7 0"/><rect x="5.5" y="7" width="9" height="6"/></g><rect x="9.5" y="9.5" width="1.3" height="1.3" fill="#cfcfcf"/></svg>
<div class="a" style="left:1323px;top:253.36666666666667px;width:174px;height:1px;background:#3f3f3f;border-radius:0px;"></div>
<div class="t" style="left:1338.2px;top:256.32px;font-size:11px;color:#dcdcdc;letter-spacing:0.45px;">Z</div>
<div class="t" style="left:1333.3px;width:150px;text-align:right;top:256.32px;font-size:11px;color:#e6e6e6;letter-spacing:0.8px;">0°</div>
<svg class="a" style="left:1520px;top:255.43333333333334px;" width="16" height="14" viewBox="0 0 16 14"><g stroke="#cfcfcf" stroke-width="1.1" fill="none"><path d="M2 7 V4.5 a3.5 3.5 0 0 1 7 0"/><rect x="5.5" y="7" width="9" height="6"/></g><rect x="9.5" y="9.5" width="1.3" height="1.3" fill="#cfcfcf"/></svg>
<div class="a" style="left:1323.2px;top:278px;width:225px;height:17.6px;background:#282828;border-radius:4px;box-shadow:inset 0 0 0 1px #262626"></div>
<div class="t" style="left:1330.2px;top:280.09px;font-size:11px;color:#e6e6e6;letter-spacing:0.45px;">XYZ Euler</div>
<svg class="a" style="left:1538.5px;top:284px;" width="9" height="6" viewBox="0 0 9 6"><path d="M1 1 L4.5 4.5 L8 1" stroke="#cfcfcf" stroke-width="1.3" fill="none"/></svg>
<div class="t" style="left:1323.2px;top:302.09px;font-size:11px;color:#d0d0d0;letter-spacing:0.45px;">Scale:</div>
<div class="a" style="left:1323px;top:320.2px;width:174px;height:57.19999999999999px;background:#545454;border-radius:4px;"></div>
<div class="t" style="left:1338.2px;top:322.12px;font-size:11px;color:#dcdcdc;letter-spacing:0.45px;">X</div>
<div class="t" style="left:1333.3px;width:150px;text-align:right;top:322.12px;font-size:11px;color:#e6e6e6;letter-spacing:0.8px;">1.000</div>
<svg class="a" style="left:1520px;top:321.23333333333335px;" width="16" height="14" viewBox="0 0 16 14"><g stroke="#cfcfcf" stroke-width="1.1" fill="none"><path d="M2 7 V4.5 a3.5 3.5 0 0 1 7 0"/><rect x="5.5" y="7" width="9" height="6"/></g><rect x="9.5" y="9.5" width="1.3" height="1.3" fill="#cfcfcf"/></svg>
<div class="a" style="left:1323px;top:338.26666666666665px;width:174px;height:1px;background:#3f3f3f;border-radius:0px;"></div>
<div class="t" style="left:1338.2px;top:341.19px;font-size:11px;color:#dcdcdc;letter-spacing:0.45px;">Y</div>
<div class="t" style="left:1333.3px;width:150px;text-align:right;top:341.19px;font-size:11px;color:#e6e6e6;letter-spacing:0.8px;">1.000</div>
<svg class="a" style="left:1520px;top:340.29999999999995px;" width="16" height="14" viewBox="0 0 16 14"><g stroke="#cfcfcf" stroke-width="1.1" fill="none"><path d="M2 7 V4.5 a3.5 3.5 0 0 1 7 0"/><rect x="5.5" y="7" width="9" height="6"/></g><rect x="9.5" y="9.5" width="1.3" height="1.3" fill="#cfcfcf"/></svg>
<div class="a" style="left:1323px;top:357.3333333333333px;width:174px;height:1px;background:#3f3f3f;border-radius:0px;"></div>
<div class="t" style="left:1338.2px;top:360.26px;font-size:11px;color:#dcdcdc;letter-spacing:0.45px;">Z</div>
<div class="t" style="left:1333.3px;width:150px;text-align:right;top:360.26px;font-size:11px;color:#e6e6e6;letter-spacing:0.8px;">1.000</div>
<svg class="a" style="left:1520px;top:359.3666666666667px;" width="16" height="14" viewBox="0 0 16 14"><g stroke="#cfcfcf" stroke-width="1.1" fill="none"><path d="M2 7 V4.5 a3.5 3.5 0 0 1 7 0"/><rect x="5.5" y="7" width="9" height="6"/></g><rect x="9.5" y="9.5" width="1.3" height="1.3" fill="#cfcfcf"/></svg>
<svg class="a" style="left:1324.5px;top:397px;" width="6" height="10" viewBox="0 0 6 10"><path d="M1 1 L5 5 L1 9" stroke="#cfcfcf" stroke-width="1.2" fill="none"/></svg>
<div class="t" style="left:1336px;top:395.19px;font-size:11px;color:#e6e6e6;letter-spacing:0.45px;">Properties</div>
<svg class="a" style="left:1541px;top:399px;" width="11" height="6" viewBox="0 0 11 6"><rect x="0" y="0" width="1" height="1" fill="#a8a8a8"/><rect x="0" y="1" width="1" height="1" fill="#000"/><rect x="0" y="3" width="1" height="1" fill="#a8a8a8"/><rect x="0" y="4" width="1" height="1" fill="#000"/><rect x="3" y="0" width="1" height="1" fill="#a8a8a8"/><rect x="3" y="1" width="1" height="1" fill="#000"/><rect x="3" y="3" width="1" height="1" fill="#a8a8a8"/><rect x="3" y="4" width="1" height="1" fill="#000"/><rect x="6" y="0" width="1" height="1" fill="#a8a8a8"/><rect x="6" y="1" width="1" height="1" fill="#000"/><rect x="6" y="3" width="1" height="1" fill="#a8a8a8"/><rect x="6" y="4" width="1" height="1" fill="#000"/><rect x="9" y="0" width="1" height="1" fill="#a8a8a8"/><rect x="9" y="1" width="1" height="1" fill="#000"/><rect x="9" y="3" width="1" height="1" fill="#a8a8a8"/><rect x="9" y="4" width="1" height="1" fill="#000"/></svg>
<div class="a" style="left:1588px;top:27px;width:331px;height:232px;background:#282828;border-radius:5px;"></div>
<div class="a" style="left:1588px;top:27px;width:331px;height:25px;background:#282828;border-radius:6px;border-bottom-left-radius:0;border-bottom-right-radius:0"></div>
<div class="a" style="left:1596.6px;top:29.5px;width:30.90000000000009px;height:19.0px;background:#282828;border-radius:4px;box-shadow:inset 0 0 0 1px #383838"></div>
<svg class="a" style="left:1601px;top:32px;" width="18" height="15" viewBox="0 0 18 15"><g fill="#dcdcdc"><rect x="0" y="0" width="4" height="2.5"/><rect x="6" y="5" width="6" height="3"/><rect x="6" y="10" width="6" height="3"/></g><path d="M2 2.5 V11.5 H6 M2 6.5 H6" stroke="#dcdcdc" stroke-width="1" fill="none"/></svg>
<svg class="a" style="left:1617px;top:37px;" width="9" height="6" viewBox="0 0 9 6"><path d="M1 1 L4.5 4.5 L8 1" stroke="#cfcfcf" stroke-width="1.3" fill="none"/></svg>
<div class="a" style="left:1633px;top:29.5px;width:32px;height:19.0px;background:#282828;border-radius:4px;box-shadow:inset 0 0 0 1px #383838"></div>
<svg class="a" style="left:1637px;top:32px;" width="16" height="15" viewBox="0 0 16 15"><g stroke="#dcdcdc" stroke-width="1.1" fill="none"><path d="M1 4.5 V13.5 H10"/><path d="M3 2.5 V11.5 H12"/><rect x="5" y="0.5" width="9.5" height="9.5"/></g><path d="M6 9 L8.5 4 L10.5 7 L11.5 5.5 L13.5 9Z" fill="#dcdcdc"/><circle cx="12" cy="2.8" r="1" fill="#dcdcdc"/></svg>
<svg class="a" style="left:1655px;top:37px;" width="9" height="6" viewBox="0 0 9 6"><path d="M1 1 L4.5 4.5 L8 1" stroke="#cfcfcf" stroke-width="1.3" fill="none"/></svg>
<div class="a" style="left:1683px;top:29.5px;width:119px;height:19.0px;background:#1d1d1d;border-radius:4px;box-shadow:inset 0 0 0 1px #383838"></div>
<svg class="a" style="left:1688px;top:32px;" width="15" height="15" viewBox="0 0 15 15"><circle cx="9" cy="6" r="4.5" stroke="#cfcfcf" stroke-width="1.2" fill="none"/><path d="M6 9 L1.5 13.5" stroke="#cfcfcf" stroke-width="1.3"/></svg>
<div class="t" style="left:1709px;top:32.39px;font-size:11px;color:#6c6c6c;letter-spacing:0.45px;">Search</div>
<div class="a" style="left:1855px;top:29.5px;width:32px;height:19.0px;background:#282828;border-radius:4px;box-shadow:inset 0 0 0 1px #383838"></div>
<svg class="a" style="left:1859px;top:32px;" width="14" height="15" viewBox="0 0 14 15"><path d="M1 1.5 H13 L8.5 7 V13.5 L6 11.5 V7Z" stroke="#dcdcdc" stroke-width="1.1" fill="none"/></svg>
<svg class="a" style="left:1876px;top:37px;" width="9" height="6" viewBox="0 0 9 6"><path d="M1 1 L4.5 4.5 L8 1" stroke="#cfcfcf" stroke-width="1.3" fill="none"/></svg>
<div class="a" style="left:1892px;top:29.5px;width:19.5px;height:19px;background:#3d3d3d;border-radius:4px;"></div>
<svg class="a" style="left:1895px;top:31px;" width="15" height="16" viewBox="0 0 15 16"><g stroke="#dcdcdc" stroke-width="1.1" fill="none"><rect x="1.5" y="7" width="10" height="7"/><path d="M0.5 4 H9"/></g><circle cx="11" cy="4" r="3.3" fill="#dcdcdc"/><path d="M11 2 V6 M9 4 H13" stroke="#3d3d3d" stroke-width="1"/><rect x="4.5" y="9.5" width="4" height="1.2" fill="#dcdcdc"/></svg>
<div class="a" style="left:1589px;top:73px;width:330px;height:20px;background:#2b2b2b;border-radius:0px;"></div>
<div class="a" style="left:1589px;top:113px;width:330px;height:20px;background:#2b2b2b;border-radius:0px;"></div>
<div class="a" style="left:1589px;top:153px;width:330px;height:20px;background:#2b2b2b;border-radius:0px;"></div>
<div class="a" style="left:1589px;top:173px;width:330px;height:20px;background:#4b5f8c;border-radius:0px;"></div>
<div class="a" style="left:1617px;top:98px;width:1px;height:90px;background:#4a4a4a;border-radius:0px;"></div>
<svg class="a" style="left:1611px;top:56px;" width="14" height="14" viewBox="0 0 14 14"><rect x="0.5" y="0.5" width="13" height="2.6" fill="#dcdcdc"/><rect x="1.5" y="4.3" width="11" height="9" fill="#dcdcdc"/><rect x="5" y="6.5" width="4" height="1.5" fill="#333"/></svg>
<div class="t" style="left:1632.4px;top:57.29px;font-size:11px;color:#dcdcdc;letter-spacing:0.45px;">Scene Collection</div>
<svg class="a" style="left:1614px;top:80px;" width="9" height="6" viewBox="0 0 9 6"><path d="M1 1 L4.5 4.5 L8 1" stroke="#cfcfcf" stroke-width="1.3" fill="none"/></svg>
<div class="a" style="left:1628px;top:74px;width:20px;height:18px;background:#3e3e3e;border-radius:5px;box-shadow:inset 0 0 0 1px #4a4a4a"></div>
<svg class="a" style="left:1631px;top:76px;" width="14" height="14" viewBox="0 0 14 14"><rect x="0.5" y="0.5" width="13" height="2.6" fill="#dcdcdc"/><rect x="1.5" y="4.3" width="11" height="9" fill="#dcdcdc"/><rect x="5" y="6.5" width="4" height="1.5" fill="#333"/></svg>
<div class="t" style="left:1652px;top:77.09px;font-size:11px;color:#e6e6e6;letter-spacing:0.45px;">Collection</div>
<svg class="a" style="left:1636px;top:98px;" width="6" height="10" viewBox="0 0 6 10"><path d="M1 1 L5 5 L1 9" stroke="#cfcfcf" stroke-width="1.2" fill="none"/></svg>
<div class="t" style="left:1672px;top:96.99px;font-size:11px;color:#e6e6e6;letter-spacing:0.45px;">Camera</div>
<svg class="a" style="left:1636px;top:118px;" width="6" height="10" viewBox="0 0 6 10"><path d="M1 1 L5 5 L1 9" stroke="#cfcfcf" stroke-width="1.2" fill="none"/></svg>
<div class="t" style="left:1672px;top:116.99px;font-size:11px;color:#e6e6e6;letter-spacing:0.45px;">Cube</div>
<svg class="a" style="left:1636px;top:138px;" width="6" height="10" viewBox="0 0 6 10"><path d="M1 1 L5 5 L1 9" stroke="#cfcfcf" stroke-width="1.2" fill="none"/></svg>
<div class="t" style="left:1672px;top:136.99px;font-size:11px;color:#e6e6e6;letter-spacing:0.45px;">Plane</div>
<svg class="a" style="left:1636px;top:158px;" width="6" height="10" viewBox="0 0 6 10"><path d="M1 1 L5 5 L1 9" stroke="#cfcfcf" stroke-width="1.2" fill="none"/></svg>
<div class="t" style="left:1672px;top:156.99px;font-size:11px;color:#e6e6e6;letter-spacing:0.45px;">Spot</div>
<svg class="a" style="left:1636px;top:178px;" width="6" height="10" viewBox="0 0 6 10"><path d="M1 1 L5 5 L1 9" stroke="#8d9ab0" stroke-width="1.2" fill="none"/></svg>
<div class="t" style="left:1672px;top:176.99px;font-size:11px;color:#a7b1c4;letter-spacing:0.45px;">Sun</div>
<svg class="a" style="left:1650px;top:97px;" width="16" height="13" viewBox="0 0 16 13"><circle cx="4" cy="3.5" r="3" fill="#cd854c"/><circle cx="10.5" cy="3.5" r="3" fill="#cd854c"/><rect x="2" y="7" width="9" height="5.5" fill="#cd854c"/><path d="M11 9.5 L15 7.5 V12.5Z" fill="#cd854c"/><rect x="0" y="8.5" width="2" height="2" fill="#cd854c"/></svg>
<svg class="a" style="left:1651px;top:116px;" width="15" height="14" viewBox="0 0 15 14"><path d="M1 1 H14 L7.5 13.5Z" fill="#cd854c"/><path d="M4.5 3.5 H10.5 L7.5 9.5Z" fill="#282828" transform="translate(0,0)"/></svg>
<svg class="a" style="left:1651px;top:136px;" width="15" height="14" viewBox="0 0 15 14"><path d="M1 1 H14 L7.5 13.5Z" fill="#cd854c"/><path d="M4.5 3.5 H10.5 L7.5 9.5Z" fill="#282828" transform="translate(0,0)"/></svg>
<svg class="a" style="left:1651px;top:155px;" width="14" height="16" viewBox="0 0 14 16"><circle cx="7" cy="6" r="5.5" fill="#cd854c"/><rect x="4" y="10" width="6" height="2" fill="#cd854c"/><rect x="4.5" y="13" width="5" height="1.2" fill="#cd854c"/><path d="M5 5 V8 H9 V5" stroke="#2b2b2b" stroke-width="1" fill="none"/></svg>
<div class="a" style="left:1648px;top:174px;width:20px;height:18px;background:#5b6f98;border-radius:5px;box-shadow:inset 0 0 0 1px #7080a8"></div>
<svg class="a" style="left:1651px;top:175px;" width="14" height="16" viewBox="0 0 14 16"><g opacity="0.55"><circle cx="7" cy="6" r="5.5" fill="#cd854c"/><rect x="4" y="10" width="6" height="2" fill="#cd854c"/><rect x="4.5" y="13" width="5" height="1.2" fill="#cd854c"/></g></svg>
<div class="a" style="left:1732px;top:94px;width:20px;height:18px;background:#3e3e3e;border-radius:5px;box-shadow:inset 0 0 0 1px #4e4e4e"></div>
<svg class="a" style="left:1734px;top:96px;" width="16" height="14" viewBox="0 0 16 14"><g stroke="#27c59a" stroke-width="1.1" fill="none"><path d="M2 5 a3 3 0 0 1 3 -4 H11 a3 3 0 0 1 0 6 H5 a3 3 0 0 1 -3 -2Z"/><circle cx="11" cy="4" r="1.2"/><path d="M5 9 H11 V13 H5Z M12 11 L15 9 V13Z M2 10 H4"/></g></svg>
<svg class="a" style="left:1723px;top:116px;" width="15" height="14" viewBox="0 0 15 14"><g stroke="#27c59a" stroke-width="1.2" fill="none"><path d="M2.5 2.5 H12.5 L7.5 11.5Z"/></g><g fill="#282828" stroke="#27c59a" stroke-width="1"><rect x="0.5" y="0.5" width="3" height="3"/><rect x="11.5" y="0.5" width="3" height="3"/><rect x="6" y="10.5" width="3" height="3"/></g></svg>
<svg class="a" style="left:1724px;top:136px;" width="15" height="14" viewBox="0 0 15 14"><g stroke="#27c59a" stroke-width="1.2" fill="none"><path d="M2.5 2.5 H12.5 L7.5 11.5Z"/></g><g fill="#282828" stroke="#27c59a" stroke-width="1"><rect x="0.5" y="0.5" width="3" height="3"/><rect x="11.5" y="0.5" width="3" height="3"/><rect x="6" y="10.5" width="3" height="3"/></g></svg>
<svg class="a" style="left:1720px;top:156px;" width="15" height="15" viewBox="0 0 15 15"><path d="M4 12 C1 8 4 3 14 1 C12 11 8 13 4 12Z M7.5 8.5 L1 14" stroke="#27c59a" stroke-width="1.1" fill="none"/></svg>
<svg class="a" style="left:1716px;top:176px;" width="15" height="15" viewBox="0 0 15 15"><circle cx="7.5" cy="7.5" r="3.3" stroke="#27c59a" stroke-width="1.1" fill="none"/><g stroke="#27c59a" stroke-width="1.1"><path d="M7.5 0.5 V3 M7.5 12 V14.5 M0.5 7.5 H3 M12 7.5 H14.5 M2.5 2.5 L4.3 4.3 M10.7 10.7 L12.5 12.5 M12.5 2.5 L10.7 4.3 M4.3 10.7 L2.5 12.5"/></g></svg>
<svg class="a" style="left:1854px;top:77px;" width="12" height="12" viewBox="0 0 12 12"><rect x="0" y="0" width="12" height="12" rx="2" fill="#e8e8e8"/><path d="M2.5 6 L5 8.5 L9.5 3" stroke="#222" stroke-width="1.6" fill="none"/></svg>
<svg class="a" style="left:1874px;top:77px;" width="14" height="10" viewBox="0 0 14 10"><path d="M1 5 Q7 -2 13 5 Q7 12 1 5Z" stroke="#e6e6e6" stroke-width="1.4" fill="none"/><circle cx="7" cy="5" r="2.2" fill="#e6e6e6"/></svg>
<svg class="a" style="left:1894px;top:76.5px;" width="14" height="12" viewBox="0 0 14 12"><path d="M1 3 H4 L5.5 1 H8.5 L10 3 H13 V11 H1Z" fill="#e6e6e6" stroke="#e6e6e6" stroke-width="0.8"/><circle cx="7" cy="6.8" r="2.8" fill="#282828"/><circle cx="7" cy="6.8" r="1.5" fill="#e6e6e6"/></svg>
<svg class="a" style="left:1874px;top:97px;" width="14" height="10" viewBox="0 0 14 10"><path d="M1 5 Q7 -2 13 5 Q7 12 1 5Z" stroke="#e6e6e6" stroke-width="1.4" fill="none"/><circle cx="7" cy="5" r="2.2" fill="#e6e6e6"/></svg>
<svg class="a" style="left:1894px;top:96.5px;" width="14" height="12" viewBox="0 0 14 12"><path d="M1 3 H4 L5.5 1 H8.5 L10 3 H13 V11 H1Z" fill="#e6e6e6" stroke="#e6e6e6" stroke-width="0.8"/><circle cx="7" cy="6.8" r="2.8" fill="#282828"/><circle cx="7" cy="6.8" r="1.5" fill="#e6e6e6"/></svg>
<svg class="a" style="left:1874px;top:117px;" width="14" height="10" viewBox="0 0 14 10"><path d="M1 5 Q7 -2 13 5 Q7 12 1 5Z" stroke="#e6e6e6" stroke-width="1.4" fill="none"/><circle cx="7" cy="5" r="2.2" fill="#e6e6e6"/></svg>
<svg class="a" style="left:1894px;top:116.5px;" width="14" height="12" viewBox="0 0 14 12"><path d="M1 3 H4 L5.5 1 H8.5 L10 3 H13 V11 H1Z" fill="#e6e6e6" stroke="#e6e6e6" stroke-width="0.8"/><circle cx="7" cy="6.8" r="2.8" fill="#282828"/><circle cx="7" cy="6.8" r="1.5" fill="#e6e6e6"/></svg>
<svg class="a" style="left:1874px;top:137px;" width="14" height="10" viewBox="0 0 14 10"><path d="M1 5 Q7 -2 13 5 Q7 12 1 5Z" stroke="#e6e6e6" stroke-width="1.4" fill="none"/><circle cx="7" cy="5" r="2.2" fill="#e6e6e6"/></svg>
<svg class="a" style="left:1894px;top:136.5px;" width="14" height="12" viewBox="0 0 14 12"><path d="M1 3 H4 L5.5 1 H8.5 L10 3 H13 V11 H1Z" fill="#e6e6e6" stroke="#e6e6e6" stroke-width="0.8"/><circle cx="7" cy="6.8" r="2.8" fill="#282828"/><circle cx="7" cy="6.8" r="1.5" fill="#e6e6e6"/></svg>
<svg class="a" style="left:1874px;top:157px;" width="14" height="10" viewBox="0 0 14 10"><path d="M1 5 Q7 -2 13 5 Q7 12 1 5Z" stroke="#e6e6e6" stroke-width="1.4" fill="none"/><circle cx="7" cy="5" r="2.2" fill="#e6e6e6"/></svg>
<svg class="a" style="left:1894px;top:156.5px;" width="14" height="12" viewBox="0 0 14 12"><path d="M1 3 H4 L5.5 1 H8.5 L10 3 H13 V11 H1Z" fill="#e6e6e6" stroke="#e6e6e6" stroke-width="0.8"/><circle cx="7" cy="6.8" r="2.8" fill="#282828"/><circle cx="7" cy="6.8" r="1.5" fill="#e6e6e6"/></svg>
<svg class="a" style="left:1874px;top:181px;" width="14" height="6" viewBox="0 0 14 6"><path d="M1 1 Q7 7 13 1" stroke="#dfe3ea" stroke-width="1.3" fill="none"/></svg>
<svg class="a" style="left:1894px;top:177px;" width="14" height="12" viewBox="0 0 14 12"><path d="M1 3 H4 L5.5 1 H8.5 L10 3 H13 V11 H1Z" fill="none" stroke="#e6e6e6" stroke-width="1.1"/><path d="M5 5 L9 9 M9 5 L5 9" stroke="#e6e6e6" stroke-width="1.1"/></svg>
<svg class="a" style="left:1784px;top:176px;" width="14" height="20" viewBox="0 0 14 20"><path d="M1 1 V15 L4.5 11.5 L7.5 18 L10 17 L7 10.5 H12Z" fill="#fff" stroke="#000" stroke-width="1"/></svg>
<div class="a" style="left:1588px;top:262px;width:331px;height:724px;background:#303030;border-radius:5px;"></div>
<div class="a" style="left:1596.7px;top:265px;width:30.799999999999955px;height:18.30000000000001px;background:#282828;border-radius:4px;box-shadow:inset 0 0 0 1px #3a3a3a"></div>
<svg class="a" style="left:1600px;top:267px;" width="17" height="14" viewBox="0 0 17 14"><rect x="0.5" y="0.5" width="14" height="5.5" rx="2.75" fill="#e6e6e6"/><rect x="0.5" y="8" width="14" height="5.5" rx="2.75" fill="#e6e6e6"/><rect x="9" y="2" width="4" height="2.5" rx="1" fill="#303030"/><rect x="9" y="9.5" width="4" height="2.5" rx="1" fill="#303030"/></svg>
<svg class="a" style="left:1616px;top:272px;" width="9" height="6" viewBox="0 0 9 6"><path d="M1 1 L4.5 4.5 L8 1" stroke="#cfcfcf" stroke-width="1.3" fill="none"/></svg>
<div class="a" style="left:1695.5px;top:265px;width:117.90000000000009px;height:18.30000000000001px;background:#1d1d1d;border-radius:4px;box-shadow:inset 0 0 0 1px #3a3a3a"></div>
<svg class="a" style="left:1700px;top:267px;" width="15" height="15" viewBox="0 0 15 15"><circle cx="9" cy="6" r="4.5" stroke="#cfcfcf" stroke-width="1.2" fill="none"/><path d="M6 9 L1.5 13.5" stroke="#cfcfcf" stroke-width="1.3"/></svg>
<div class="t" style="left:1721px;top:267.69px;font-size:11px;color:#6c6c6c;letter-spacing:0.45px;">Search</div>
<div class="a" style="left:1892.6px;top:265px;width:18.90000000000009px;height:18.30000000000001px;background:#282828;border-radius:4px;box-shadow:inset 0 0 0 1px #3a3a3a"></div>
<svg class="a" style="left:1897.5px;top:272px;" width="9" height="6" viewBox="0 0 9 6"><path d="M1 1 L4.5 4.5 L8 1" stroke="#cfcfcf" stroke-width="1.3" fill="none"/></svg>
<div class="a" style="left:1588px;top:287px;width:28px;height:699px;background:#1d1d1d;border-radius:0px;border-bottom-left-radius:6px"></div>
<div class="a" style="left:1590px;top:600px;width:26px;height:26px;background:#303030;border-radius:4px;border-top-right-radius:0;border-bottom-right-radius:0"></div>
<div class="a" style="left:1588px;top:323px;width:28px;height:1px;background:#161616;border-radius:0px;"></div>
<svg class="a" style="left:1586px;top:288px;" width="32" height="182" viewBox="0 0 32 182"><g transform="translate(-1586,-288)">
<path d="M1598.2 302.5 V309" stroke="#c8c8c8" stroke-width="1.1"/><ellipse cx="1598.2" cy="312.4" rx="2.4" ry="2.8" fill="#c8c8c8"/>
<path d="M1604 302.8 V305.3 a2.6 2.6 0 0 0 5.2 0 V302.8" stroke="#c8c8c8" stroke-width="1.6" fill="none"/><path d="M1606.6 307.5 V314.5" stroke="#c8c8c8" stroke-width="2" stroke-linecap="round"/>
<rect x="1596.5" y="340.5" width="12.5" height="9.5" rx="1.5" fill="none" stroke="#c8c8c8" stroke-width="1.2"/><path d="M1599.5 340.5 L1600.5 338.8 H1603.5 L1604.5 340.5" fill="#c8c8c8"/><rect x="1606.8" y="338.5" width="2" height="1" fill="#c8c8c8"/>
<path d="M1598.5 343.5 H1604 M1598.5 345.5 H1604 M1598.5 347.5 H1604" stroke="#c8c8c8" stroke-width="0.9"/><rect x="1605.6" y="342.6" width="1.8" height="1.8" fill="#c8c8c8"/><rect x="1605.6" y="346" width="1.8" height="1.8" fill="#c8c8c8"/>
<rect x="1596" y="366.7" width="13.5" height="4" rx="1.5" fill="#c8c8c8"/><rect x="1598" y="370.5" width="9.5" height="8.8" fill="#c8c8c8"/><path d="M1599.5 378 L1602.5 374 L1604.5 376 L1605.5 375 L1606.5 378Z" fill="#1d1d1d"/><circle cx="1605.3" cy="372.5" r="0.9" fill="#1d1d1d"/>
<g stroke="#c8c8c8" stroke-width="1" fill="none"><path d="M1596.5 400 V408 H1604.5"/><path d="M1598.5 397.5 V406 H1606.5"/><rect x="1600.5" y="394.8" width="9" height="9"/></g><path d="M1601.5 402.5 L1604 398.5 L1606 401 L1607 400 L1608.5 402.5Z" fill="#c8c8c8"/><circle cx="1607.3" cy="396.8" r="0.8" fill="#c8c8c8"/>
<path d="M1600 423 L1596.5 433.5 H1601" fill="#c8c8c8"/><path d="M1600 423 L1603.5 430" stroke="#c8c8c8" stroke-width="1"/><circle cx="1608" cy="424.8" r="1.9" fill="#c8c8c8"/><circle cx="1604.3" cy="431.2" r="3.5" fill="#1d1d1d" stroke="#c8c8c8" stroke-width="1.2"/><path d="M1602.8 430.6 a1.6 1.6 0 0 1 1.6 -1.4" stroke="#c8c8c8" stroke-width="0.7" fill="none"/>
<circle cx="1602.8" cy="457.5" r="5.6" fill="none" stroke="#c9505f" stroke-width="1.3"/><path d="M1599.5 454 Q1601.5 453 1603 455 T1605.5 459 L1603.5 461.5 Q1602 459.5 1600 459Z" fill="#c9505f"/><path d="M1596.5 463.5 L1609 451" stroke="#c9505f" stroke-width="1.1"/>
</g></svg>
<svg class="a" style="left:1595px;top:485px;" width="16" height="15" viewBox="0 0 16 15"><rect x="1" y="1" width="14" height="3" fill="none" stroke="#c8c8c8" stroke-width="1.1"/><rect x="2" y="5" width="12" height="9" fill="none" stroke="#c8c8c8" stroke-width="1.1"/><rect x="6" y="7" width="4" height="1.3" fill="#c8c8c8"/></svg>
<svg class="a" style="left:1595px;top:521px;" width="16" height="15" viewBox="0 0 16 15"><rect x="3.5" y="3.5" width="9" height="9" fill="#cd854c"/><path d="M1 4 V1 H4 M12 1 H15 V4 M15 12 V15 H12 M4 15 H1 V12" stroke="#cd854c" stroke-width="1" fill="none"/></svg>
<svg class="a" style="left:1595px;top:549px;" width="16" height="15" viewBox="0 0 16 15"><circle cx="7.5" cy="8" r="5.5" fill="none" stroke="#6a8fdc" stroke-width="1.3"/><circle cx="7.5" cy="8" r="2" fill="#6a8fdc"/><circle cx="13" cy="3" r="2.2" fill="#6a8fdc"/></svg>
<svg class="a" style="left:1595px;top:577px;" width="16" height="15" viewBox="0 0 16 15"><circle cx="7" cy="9" r="5.5" fill="none" stroke="#6a8fdc" stroke-width="1.5"/><circle cx="7" cy="9" r="2.3" fill="none" stroke="#6a8fdc" stroke-width="1.5"/><path d="M8 3 L14 1 L12 7" stroke="#6a8fdc" stroke-width="1.3" fill="none"/></svg>
<svg class="a" style="left:1595px;top:605px;" width="16" height="16" viewBox="0 0 16 16"><circle cx="8" cy="6.5" r="5.5" fill="none" stroke="#27c59a" stroke-width="1.3"/><path d="M5.5 12.5 H10.5 M6 14.5 H10" stroke="#27c59a" stroke-width="1.2"/><path d="M6 6 V9 H10 V6" stroke="#27c59a" stroke-width="1" fill="none"/></svg>
<svg class="a" style="left:1627px;top:297px;" width="15" height="15" viewBox="0 0 15 15"><g stroke="#dcdcdc" stroke-width="1.1" fill="none"><path d="M1 4 V1 H4 M11 1 H14 V4 M14 11 V14 H11 M4 14 H1 V11"/></g><rect x="3.5" y="3.5" width="8" height="8" fill="#e8e8e8"/></svg>
<div class="t" style="left:1650.2px;top:298.79px;font-size:11px;color:#e6e6e6;letter-spacing:0.45px;">Sun</div>
<svg class="a" style="left:1686.5px;top:300px;" width="6" height="10" viewBox="0 0 6 10"><path d="M1 1 L5 5 L1 9" stroke="#cfcfcf" stroke-width="1.2" fill="none"/></svg>
<svg class="a" style="left:1702px;top:297px;" width="15" height="15" viewBox="0 0 15 15"><circle cx="7.5" cy="7.5" r="3.3" stroke="#e6e6e6" stroke-width="1.1" fill="none"/><g stroke="#e6e6e6" stroke-width="1.1"><path d="M7.5 0.5 V3 M7.5 12 V14.5 M0.5 7.5 H3 M12 7.5 H14.5 M2.5 2.5 L4.3 4.3 M10.7 10.7 L12.5 12.5 M12.5 2.5 L10.7 4.3 M4.3 10.7 L2.5 12.5"/></g></svg>
<div class="t" style="left:1725.4px;top:298.79px;font-size:11px;color:#e6e6e6;letter-spacing:0.45px;">Sun</div>
<svg class="a" style="left:1895px;top:298px;" width="14" height="14" viewBox="0 0 14 14"><g stroke="#bdbdbd" stroke-width="1.1" fill="none"><path d="M8 1 L13 6 L11 7 L9 9 L8 12 L2 6 L5 5 L7 3 Z"/><line x1="5" y1="9" x2="1" y2="13"/></g></svg>
<div class="a" style="left:1624.6px;top:331.4px;width:285.4px;height:19.5px;background:#3a3a3a;border-radius:5px;"></div>
<div class="a" style="left:1625.6px;top:332.9px;width:30px;height:16.5px;background:#282828;border-radius:4px;border-top-right-radius:0;border-bottom-right-radius:0"></div>
<svg class="a" style="left:1628px;top:334px;" width="14" height="14" viewBox="0 0 14 14"><circle cx="7.5" cy="7.5" r="3.3" stroke="#e6e6e6" stroke-width="1.1" fill="none"/><g stroke="#e6e6e6" stroke-width="1.1"><path d="M7.5 0.5 V3 M7.5 12 V14.5 M0.5 7.5 H3 M12 7.5 H14.5 M2.5 2.5 L4.3 4.3 M10.7 10.7 L12.5 12.5 M12.5 2.5 L10.7 4.3 M4.3 10.7 L2.5 12.5"/></g></svg>
<svg class="a" style="left:1645px;top:338px;" width="9" height="6" viewBox="0 0 9 6"><path d="M1 1 L4.5 4.5 L8 1" stroke="#cfcfcf" stroke-width="1.3" fill="none"/></svg>
<div class="a" style="left:1656px;top:332.4px;width:234px;height:17.5px;background:#1d1d1d;border-radius:0px;"></div>
<div class="t" style="left:1663.2px;top:334.49px;font-size:11px;color:#e6e6e6;letter-spacing:0.45px;">Sun</div>
<div class="a" style="left:1890px;top:332.4px;width:19px;height:17.5px;background:#444444;border-radius:4px;border-top-left-radius:0;border-bottom-left-radius:0"></div>
<svg class="a" style="left:1894px;top:334px;" width="12" height="14" viewBox="0 0 12 14"><path d="M6 1 L11 3 V7 Q11 11 6 13 Q1 11 1 7 V3Z" stroke="#9a9a9a" stroke-width="1.1" fill="none"/></svg>
<div class="a" style="left:1624.1px;top:361.6px;width:287px;height:329.7px;background:#3d3d3d;border-radius:5px;"></div>
<svg class="a" style="left:1632.5px;top:372px;" width="11" height="6" viewBox="0 0 11 6"><path d="M1 0.8 L5.5 5 L10 0.8" stroke="#d8d8d8" stroke-width="1.1" fill="none"/></svg>
<div class="t" style="left:1646.2px;top:367.49px;font-size:11px;color:#e6e6e6;letter-spacing:0.45px;">Light</div>
<svg class="a" style="left:1893px;top:371px;" width="11" height="6" viewBox="0 0 11 6"><rect x="0" y="0" width="1" height="1" fill="#a8a8a8"/><rect x="0" y="1" width="1" height="1" fill="#000"/><rect x="0" y="3" width="1" height="1" fill="#a8a8a8"/><rect x="0" y="4" width="1" height="1" fill="#000"/><rect x="3" y="0" width="1" height="1" fill="#a8a8a8"/><rect x="3" y="1" width="1" height="1" fill="#000"/><rect x="3" y="3" width="1" height="1" fill="#a8a8a8"/><rect x="3" y="4" width="1" height="1" fill="#000"/><rect x="6" y="0" width="1" height="1" fill="#a8a8a8"/><rect x="6" y="1" width="1" height="1" fill="#000"/><rect x="6" y="3" width="1" height="1" fill="#a8a8a8"/><rect x="6" y="4" width="1" height="1" fill="#000"/><rect x="9" y="0" width="1" height="1" fill="#a8a8a8"/><rect x="9" y="1" width="1" height="1" fill="#000"/><rect x="9" y="3" width="1" height="1" fill="#a8a8a8"/><rect x="9" y="4" width="1" height="1" fill="#000"/></svg>
<div class="a" style="left:1633px;top:395px;width:269px;height:18.3px;background:#545454;border-radius:4px;"></div>
<div class="a" style="left:1699px;top:395px;width:67px;height:18.3px;background:#4772b3;border-radius:0px;"></div>
<div class="a" style="left:1698px;top:395px;width:1px;height:18.3px;background:#3d3d3d;border-radius:0px;"></div>
<div class="a" style="left:1766px;top:395px;width:1px;height:18.3px;background:#3d3d3d;border-radius:0px;"></div>
<div class="a" style="left:1834px;top:395px;width:1px;height:18.3px;background:#3d3d3d;border-radius:0px;"></div>
<div class="t" style="left:1660.3px;top:396.59px;font-size:11px;color:#e6e6e6;letter-spacing:0.45px;">Point</div>
<div class="t" style="left:1731.2px;top:396.59px;font-size:11px;color:#ffffff;letter-spacing:0.45px;">Sun</div>
<div class="t" style="left:1797.4px;top:396.59px;font-size:11px;color:#e6e6e6;letter-spacing:0.45px;">Spot</div>
<div class="t" style="left:1865px;top:396.59px;font-size:11px;color:#e6e6e6;letter-spacing:0.45px;">Area</div>
<svg class="a" style="left:1637px;top:397px;" width="14" height="15" viewBox="0 0 14 15"><circle cx="7" cy="6.5" r="5.5" stroke="#d6d6d6" stroke-width="1.1" fill="none"/><path d="M7 6.5 V14" stroke="#d6d6d6" stroke-width="1" stroke-dasharray="1.5 1.5"/><circle cx="7" cy="6.5" r="1" fill="#d6d6d6"/></svg>
<svg class="a" style="left:1703px;top:397px;" width="14" height="14" viewBox="0 0 14 14"><circle cx="7.5" cy="7.5" r="3.3" stroke="#ffffff" stroke-width="1.1" fill="none"/><g stroke="#ffffff" stroke-width="1.1"><path d="M7.5 0.5 V3 M7.5 12 V14.5 M0.5 7.5 H3 M12 7.5 H14.5 M2.5 2.5 L4.3 4.3 M10.7 10.7 L12.5 12.5 M12.5 2.5 L10.7 4.3 M4.3 10.7 L2.5 12.5"/></g></svg>
<svg class="a" style="left:1771px;top:397px;" width="15" height="15" viewBox="0 0 15 15"><path d="M4 12 C1 8 4 3 14 1 C12 11 8 13 4 12Z M7.5 8.5 L1 14" stroke="#d6d6d6" stroke-width="1.1" fill="none"/></svg>
<svg class="a" style="left:1839px;top:397px;" width="15" height="15" viewBox="0 0 15 15"><path d="M3 2 L10 1 L14 12 L5 14Z M8 8 L1 14" stroke="#d6d6d6" stroke-width="1.1" fill="none"/><circle cx="8" cy="7" r="0.8" fill="#d6d6d6"/></svg>
<div class="a" style="left:1633px;top:422px;width:12.5px;height:12.5px;background:#545454;border-radius:3px;"></div>
<div class="t" style="left:1649.6px;top:421.69px;font-size:11px;color:#e6e6e6;letter-spacing:0.45px;">Use Cycles Settings</div>
<div class="t" style="left:1536px;width:200px;text-align:right;top:447.09px;font-size:11px;color:#d6d6d6;letter-spacing:0.45px;">Color Mode</div>
<div class="a" style="left:1746.1px;top:445.2px;width:155.6px;height:17.6px;background:#545454;border-radius:4px;"></div>
<div class="a" style="left:1746.1px;top:445.2px;width:76.5px;height:17.6px;background:#4772b3;border-radius:4px;border-top-right-radius:0;border-bottom-right-radius:0"></div>
<div class="t" style="left:1734.3px;width:100px;text-align:center;top:447.09px;font-size:11px;color:#ffffff;letter-spacing:0.45px;">RGB Color</div>
<div class="t" style="left:1812.3px;width:100px;text-align:center;top:447.09px;font-size:11px;color:#e6e6e6;letter-spacing:0.45px;">Temperature</div>
<div class="t" style="left:1535.8px;width:200px;text-align:right;top:469.19px;font-size:11px;color:#d6d6d6;letter-spacing:0.45px;">Color</div>
<div class="a" style="left:1746px;top:467px;width:156px;height:18px;background:#ffffff;border-radius:4px;"></div>
<div class="t" style="left:1535.8px;width:200px;text-align:right;top:505.19px;font-size:11px;color:#d6d6d6;letter-spacing:0.45px;">Gain (Lux)</div>
<div class="t" style="left:1535.8px;width:200px;text-align:right;top:525.29px;font-size:11px;color:#d6d6d6;letter-spacing:0.45px;">Exposure</div>
<div class="a" style="left:1746px;top:503px;width:156px;height:38px;background:#3a3a3a;border-radius:4px;"></div>
<div class="a" style="left:1746px;top:503px;width:156px;height:18.2px;background:#545454;border-radius:4px;border-bottom-left-radius:0;border-bottom-right-radius:0"></div>
<div class="a" style="left:1746px;top:522.2px;width:156px;height:18.8px;background:#545454;border-radius:4px;border-top-left-radius:0;border-top-right-radius:0"></div>
<div class="a" style="left:1746px;top:522.2px;width:100px;height:18.8px;background:#4772b3;border-radius:0px;border-bottom-left-radius:4px"></div>
<div class="t" style="left:1773.0px;width:100px;text-align:center;top:505.19px;font-size:11px;color:#e6e6e6;letter-spacing:0.45px;">1.0000</div>
<div class="t" style="left:1773.0px;width:100px;text-align:center;top:525.29px;font-size:11px;color:#ffffff;letter-spacing:0.45px;">3.00</div>
<div class="t" style="left:1535.8px;width:200px;text-align:right;top:561.19px;font-size:11px;color:#d6d6d6;letter-spacing:0.45px;">Sun Type</div>
<div class="a" style="left:1746px;top:559.1px;width:156px;height:17.8px;background:#282828;border-radius:4px;"></div>
<div class="t" style="left:1753.3px;top:561.19px;font-size:11px;color:#e6e6e6;letter-spacing:0.45px;">Distant</div>
<svg class="a" style="left:1891.5px;top:565px;" width="9" height="6" viewBox="0 0 9 6"><path d="M1 1 L4.5 4.5 L8 1" stroke="#cfcfcf" stroke-width="1.3" fill="none"/></svg>
<div class="t" style="left:1535.8px;width:200px;text-align:right;top:585.69px;font-size:11px;color:#d6d6d6;letter-spacing:0.45px;">Size</div>
<div class="a" style="left:1746px;top:584.1px;width:156px;height:18.1px;background:#545454;border-radius:4px;"></div>
<div class="t" style="left:1773.0px;width:100px;text-align:center;top:585.69px;font-size:11px;color:#e6e6e6;letter-spacing:0.45px;">41.35</div>
<div class="a" style="left:1746.1px;top:612.9px;width:11.5px;height:11.5px;background:#4772b3;border-radius:3px;"></div>
<svg class="a" style="left:1747px;top:614px;" width="10" height="10" viewBox="0 0 10 10"><path d="M1.5 5 L4 7.5 L8.5 2" stroke="#fff" stroke-width="1.5" fill="none"/></svg>
<div class="t" style="left:1762.2px;top:611.49px;font-size:11px;color:#e6e6e6;letter-spacing:0.45px;">Normalize</div>
<div class="a" style="left:1633.2px;top:645.3px;width:268.8px;height:18.1px;background:#545454;border-radius:4px;border-bottom-left-radius:0;border-bottom-right-radius:0"></div>
<div class="t" style="left:1667.6px;width:200px;text-align:center;top:647.49px;font-size:11px;color:#e6e6e6;letter-spacing:0.45px;">Show Light Groups</div>
<div class="a" style="left:1633.2px;top:663.4px;width:268.8px;height:19.3px;background:#1d1d1d;border-radius:0px;border-radius:0 0 4px 4px"></div>
<svg class="a" style="left:1637px;top:666px;" width="13" height="15" viewBox="0 0 13 15"><circle cx="6.5" cy="5.5" r="5" fill="#e6e6e6"/><rect x="4" y="10" width="5" height="1.5" fill="#e6e6e6"/><rect x="4.5" y="12.5" width="4" height="1.2" fill="#e6e6e6"/><path d="M4.5 4.5 V7 H8.5 V4.5" stroke="#1d1d1d" stroke-width="1" fill="none"/></svg>
<div class="a" style="left:1624.1px;top:694.8px;width:287px;height:23.800000000000068px;background:#3d3d3d;border-radius:5px;"></div>
<svg class="a" style="left:1635px;top:702.3px;" width="6" height="10" viewBox="0 0 6 10"><path d="M1 1 L5 5 L1 9" stroke="#cfcfcf" stroke-width="1.2" fill="none"/></svg>
<svg class="a" style="left:1647px;top:698.8px;" width="16" height="16" viewBox="0 0 16 16"><rect x="0" y="7" width="2" height="2" fill="#ee7b2e"/><rect x="3" y="4" width="2" height="2" fill="#ee7b2e"/><rect x="3" y="10" width="2" height="2" fill="#ee7b2e"/><rect x="6" y="1" width="2" height="2" fill="#ee7b2e"/><rect x="6" y="7" width="2" height="2" fill="#ee7b2e"/><rect x="6" y="13" width="2" height="2" fill="#ee7b2e"/><rect x="9" y="4" width="2" height="2" fill="#ee7b2e"/><rect x="9" y="10" width="2" height="2" fill="#ee7b2e"/><path d="M9 3 L15 8 L9 13Z" fill="#ee7b2e"/></svg>
<div class="t" style="left:1666.2px;top:700.09px;font-size:11px;color:#e6e6e6;letter-spacing:0.45px;">Exterior Volume</div>
<svg class="a" style="left:1893px;top:703.8px;" width="11" height="6" viewBox="0 0 11 6"><rect x="0" y="0" width="1" height="1" fill="#a8a8a8"/><rect x="0" y="1" width="1" height="1" fill="#000"/><rect x="0" y="3" width="1" height="1" fill="#a8a8a8"/><rect x="0" y="4" width="1" height="1" fill="#000"/><rect x="3" y="0" width="1" height="1" fill="#a8a8a8"/><rect x="3" y="1" width="1" height="1" fill="#000"/><rect x="3" y="3" width="1" height="1" fill="#a8a8a8"/><rect x="3" y="4" width="1" height="1" fill="#000"/><rect x="6" y="0" width="1" height="1" fill="#a8a8a8"/><rect x="6" y="1" width="1" height="1" fill="#000"/><rect x="6" y="3" width="1" height="1" fill="#a8a8a8"/><rect x="6" y="4" width="1" height="1" fill="#000"/><rect x="9" y="0" width="1" height="1" fill="#a8a8a8"/><rect x="9" y="1" width="1" height="1" fill="#000"/><rect x="9" y="3" width="1" height="1" fill="#a8a8a8"/><rect x="9" y="4" width="1" height="1" fill="#000"/></svg>
<div class="a" style="left:1624.1px;top:721.5px;width:287px;height:23.899999999999977px;background:#3d3d3d;border-radius:5px;"></div>
<svg class="a" style="left:1635px;top:729.0px;" width="6" height="10" viewBox="0 0 6 10"><path d="M1 1 L5 5 L1 9" stroke="#cfcfcf" stroke-width="1.2" fill="none"/></svg>
<svg class="a" style="left:1647px;top:725.5px;" width="16" height="16" viewBox="0 0 16 16"><rect x="0" y="7" width="2" height="2" fill="#ee7b2e"/><rect x="3" y="4" width="2" height="2" fill="#ee7b2e"/><rect x="3" y="10" width="2" height="2" fill="#ee7b2e"/><rect x="6" y="1" width="2" height="2" fill="#ee7b2e"/><rect x="6" y="7" width="2" height="2" fill="#ee7b2e"/><rect x="6" y="13" width="2" height="2" fill="#ee7b2e"/><rect x="9" y="4" width="2" height="2" fill="#ee7b2e"/><rect x="9" y="10" width="2" height="2" fill="#ee7b2e"/><path d="M9 3 L15 8 L9 13Z" fill="#ee7b2e"/></svg>
<div class="t" style="left:1666.2px;top:727.09px;font-size:11px;color:#e6e6e6;letter-spacing:0.45px;">Performance</div>
<svg class="a" style="left:1893px;top:730.5px;" width="11" height="6" viewBox="0 0 11 6"><rect x="0" y="0" width="1" height="1" fill="#a8a8a8"/><rect x="0" y="1" width="1" height="1" fill="#000"/><rect x="0" y="3" width="1" height="1" fill="#a8a8a8"/><rect x="0" y="4" width="1" height="1" fill="#000"/><rect x="3" y="0" width="1" height="1" fill="#a8a8a8"/><rect x="3" y="1" width="1" height="1" fill="#000"/><rect x="3" y="3" width="1" height="1" fill="#a8a8a8"/><rect x="3" y="4" width="1" height="1" fill="#000"/><rect x="6" y="0" width="1" height="1" fill="#a8a8a8"/><rect x="6" y="1" width="1" height="1" fill="#000"/><rect x="6" y="3" width="1" height="1" fill="#a8a8a8"/><rect x="6" y="4" width="1" height="1" fill="#000"/><rect x="9" y="0" width="1" height="1" fill="#a8a8a8"/><rect x="9" y="1" width="1" height="1" fill="#000"/><rect x="9" y="3" width="1" height="1" fill="#a8a8a8"/><rect x="9" y="4" width="1" height="1" fill="#000"/></svg>
<div class="a" style="left:1px;top:27px;width:1584px;height:959px;border-radius:5px;box-shadow:inset 0 0 0 1px rgba(255,255,255,0.08);pointer-events:none"></div>
<div class="a" style="left:1588px;top:27px;width:331px;height:232px;border-radius:5px;box-shadow:inset 0 0 0 1px rgba(255,255,255,0.08);pointer-events:none"></div>
<div class="a" style="left:1588px;top:262px;width:331px;height:724px;border-radius:5px;box-shadow:inset 0 0 0 1px rgba(255,255,255,0.08);pointer-events:none"></div>
</body></html>
